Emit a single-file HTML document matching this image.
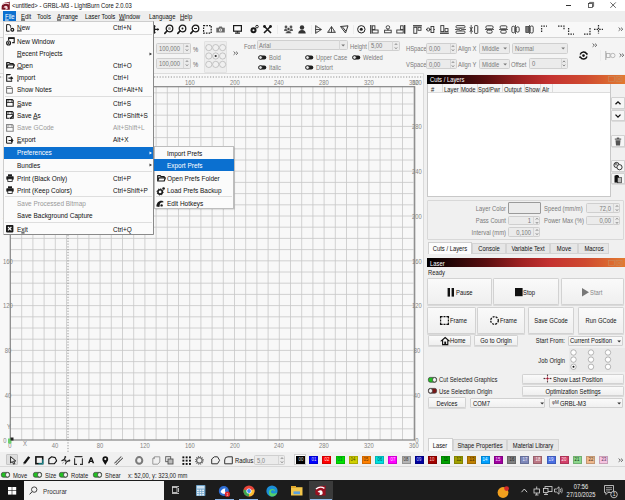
<!DOCTYPE html><html><head><meta charset="utf-8"><style>
*{margin:0;padding:0;box-sizing:border-box}
html,body{width:625px;height:500px;overflow:hidden;background:#f0f0f0;font-family:"Liberation Sans",sans-serif}
div{position:absolute}
.t u{text-decoration-thickness:0.5px;text-underline-offset:0.1px}
.t{white-space:pre;line-height:1;-webkit-text-stroke:0.02px currentColor}
.r{transform:translate(-100%,-50%)}
.c{transform:translate(-50%,-50%)}
svg{position:absolute;overflow:visible}
</style></head><body>
<div style="left:0px;top:0px;width:625px;height:11px;background:#fff"></div>
<div style="left:0px;top:11px;width:625px;height:10.5px;background:#eeeeee"></div>
<div style="left:0px;top:21.5px;width:625px;height:15.1px;background:#f8f8f8"></div>
<div style="left:0px;top:36.6px;width:625px;height:0.9px;background:#d4d4d4"></div>
<div style="left:0px;top:37.5px;width:625px;height:36.8px;background:#f4f4f4"></div>
<div style="left:0px;top:74px;width:424px;height:378px;background:#f8f8f8"></div>
<svg width="625" height="500" style="left:0;top:0"><g stroke="#c6c6c6" stroke-width="0.8"><line x1="21.70" y1="86.7" x2="21.70" y2="440" /><line x1="32.90" y1="86.7" x2="32.90" y2="440" /><line x1="44.10" y1="86.7" x2="44.10" y2="440" /><line x1="55.30" y1="86.7" x2="55.30" y2="440" /><line x1="66.50" y1="86.7" x2="66.50" y2="440" /><line x1="77.70" y1="86.7" x2="77.70" y2="440" /><line x1="88.90" y1="86.7" x2="88.90" y2="440" /><line x1="100.10" y1="86.7" x2="100.10" y2="440" /><line x1="111.30" y1="86.7" x2="111.30" y2="440" /><line x1="122.50" y1="86.7" x2="122.50" y2="440" /><line x1="133.70" y1="86.7" x2="133.70" y2="440" /><line x1="144.90" y1="86.7" x2="144.90" y2="440" /><line x1="156.10" y1="86.7" x2="156.10" y2="440" /><line x1="167.30" y1="86.7" x2="167.30" y2="440" /><line x1="178.50" y1="86.7" x2="178.50" y2="440" /><line x1="189.70" y1="86.7" x2="189.70" y2="440" /><line x1="200.90" y1="86.7" x2="200.90" y2="440" /><line x1="212.10" y1="86.7" x2="212.10" y2="440" /><line x1="223.30" y1="86.7" x2="223.30" y2="440" /><line x1="234.50" y1="86.7" x2="234.50" y2="440" /><line x1="245.70" y1="86.7" x2="245.70" y2="440" /><line x1="256.90" y1="86.7" x2="256.90" y2="440" /><line x1="268.10" y1="86.7" x2="268.10" y2="440" /><line x1="279.30" y1="86.7" x2="279.30" y2="440" /><line x1="290.50" y1="86.7" x2="290.50" y2="440" /><line x1="301.70" y1="86.7" x2="301.70" y2="440" /><line x1="312.90" y1="86.7" x2="312.90" y2="440" /><line x1="324.10" y1="86.7" x2="324.10" y2="440" /><line x1="335.30" y1="86.7" x2="335.30" y2="440" /><line x1="346.50" y1="86.7" x2="346.50" y2="440" /><line x1="357.70" y1="86.7" x2="357.70" y2="440" /><line x1="368.90" y1="86.7" x2="368.90" y2="440" /><line x1="380.10" y1="86.7" x2="380.10" y2="440" /><line x1="391.30" y1="86.7" x2="391.30" y2="440" /><line x1="402.50" y1="86.7" x2="402.50" y2="440" /><line x1="413.70" y1="86.7" x2="413.70" y2="440" /><line x1="10.5" y1="428.80" x2="414.7" y2="428.80" /><line x1="10.5" y1="417.60" x2="414.7" y2="417.60" /><line x1="10.5" y1="406.40" x2="414.7" y2="406.40" /><line x1="10.5" y1="395.20" x2="414.7" y2="395.20" /><line x1="10.5" y1="384.00" x2="414.7" y2="384.00" /><line x1="10.5" y1="372.80" x2="414.7" y2="372.80" /><line x1="10.5" y1="361.60" x2="414.7" y2="361.60" /><line x1="10.5" y1="350.40" x2="414.7" y2="350.40" /><line x1="10.5" y1="339.20" x2="414.7" y2="339.20" /><line x1="10.5" y1="328.00" x2="414.7" y2="328.00" /><line x1="10.5" y1="316.80" x2="414.7" y2="316.80" /><line x1="10.5" y1="305.60" x2="414.7" y2="305.60" /><line x1="10.5" y1="294.40" x2="414.7" y2="294.40" /><line x1="10.5" y1="283.20" x2="414.7" y2="283.20" /><line x1="10.5" y1="272.00" x2="414.7" y2="272.00" /><line x1="10.5" y1="260.80" x2="414.7" y2="260.80" /><line x1="10.5" y1="249.60" x2="414.7" y2="249.60" /><line x1="10.5" y1="238.40" x2="414.7" y2="238.40" /><line x1="10.5" y1="227.20" x2="414.7" y2="227.20" /><line x1="10.5" y1="216.00" x2="414.7" y2="216.00" /><line x1="10.5" y1="204.80" x2="414.7" y2="204.80" /><line x1="10.5" y1="193.60" x2="414.7" y2="193.60" /><line x1="10.5" y1="182.40" x2="414.7" y2="182.40" /><line x1="10.5" y1="171.20" x2="414.7" y2="171.20" /><line x1="10.5" y1="160.00" x2="414.7" y2="160.00" /><line x1="10.5" y1="148.80" x2="414.7" y2="148.80" /><line x1="10.5" y1="137.60" x2="414.7" y2="137.60" /><line x1="10.5" y1="126.40" x2="414.7" y2="126.40" /><line x1="10.5" y1="115.20" x2="414.7" y2="115.20" /><line x1="10.5" y1="104.00" x2="414.7" y2="104.00" /><line x1="10.5" y1="92.80" x2="414.7" y2="92.80" /></g><rect x="10.3" y="86.7" width="404.4" height="353.3" fill="none" stroke="#858585" stroke-width="1.2"/><line x1="0" y1="77" x2="423" y2="77" stroke="#777" stroke-width="0.8" stroke-dasharray="1.2,1.6"/><line x1="68" y1="86.7" x2="68" y2="452" stroke="#777" stroke-width="0.8" stroke-dasharray="1.2,1.6"/></svg>
<div style="left:424px;top:74px;width:201px;height:378px;background:#f0f0f0"></div>
<div style="left:0px;top:452px;width:625px;height:14px;background:#f0f0f0"></div>
<div style="left:0px;top:466px;width:625px;height:0.8px;background:#d8d8d8"></div>
<div style="left:0px;top:466.8px;width:625px;height:13.5px;background:#f0f0f0"></div>
<div style="left:0px;top:480.3px;width:625px;height:20px;background:#1c1c1c"></div>
<svg width="10" height="10" style="left:1px;top:1px"><path d="M0.6 8.6 Q0.2 4.5 1.6 3 Q4.5 0.6 7.6 1.2 L8.8 0.6 L8.8 8.8 H2.6 Z" fill="#7a1424"/><path d="M1.2 3.6 Q4.6 0.9 8 3" fill="none" stroke="#f2d8dc" stroke-width="1.1"/><path d="M2.4 6.4 Q3.6 4.4 5.8 5 Q7 5.6 6.7 7.8 Q5.5 9 4 8.4 Q5.1 7.4 4.3 6.8 Z" fill="#f2d8dc"/></svg>
<div class="t " style="left:12.3px;top:6.4px;font-size:6.60919540229885px;color:#111;transform:translateY(-50%) scaleX(0.89);transform-origin:0 50%;">&lt;untitled&gt; - GRBL-M3 - LightBurn Core 2.0.03</div>
<div style="left:566.2px;top:5.2px;width:5px;height:0.7px;background:#333"></div>
<svg width="8" height="8" style="left:588.2px;top:2.4px"><rect x="0.4" y="1.6" width="4" height="4" fill="none" stroke="#333" stroke-width="0.75"/><path d="M1.6 1.6 V0.4 H5.6 V4.4 H4.4" fill="none" stroke="#333" stroke-width="0.75"/></svg>
<svg width="8" height="8" style="left:610px;top:2.2px"><path d="M0.4 0.4 L5.8 5.8 M5.8 0.4 L0.4 5.8" stroke="#333" stroke-width="0.75"/></svg>
<div style="left:3px;top:11.2px;width:13px;height:10.3px;background:#0b70d0"></div>
<div class="t " style="left:5px;top:17.3px;font-size:7.011494252873562px;color:#fff;transform:translateY(-50%) scaleX(0.85);transform-origin:0 50%;"><u>F</u>ile</div>
<div class="t " style="left:21px;top:17.3px;font-size:7.011494252873562px;color:#111;transform:translateY(-50%) scaleX(0.85);transform-origin:0 50%;"><u>E</u>dit</div>
<div class="t " style="left:37px;top:17.3px;font-size:7.011494252873562px;color:#111;transform:translateY(-50%) scaleX(0.85);transform-origin:0 50%;">Tools</div>
<div class="t " style="left:57px;top:17.3px;font-size:7.011494252873562px;color:#111;transform:translateY(-50%) scaleX(0.85);transform-origin:0 50%;"><u>A</u>rrange</div>
<div class="t " style="left:84.6px;top:17.3px;font-size:7.011494252873562px;color:#111;transform:translateY(-50%) scaleX(0.85);transform-origin:0 50%;">Laser Tools</div>
<div class="t " style="left:119px;top:17.3px;font-size:7.011494252873562px;color:#111;transform:translateY(-50%) scaleX(0.85);transform-origin:0 50%;"><u>W</u>indow</div>
<div class="t " style="left:149px;top:17.3px;font-size:7.011494252873562px;color:#111;transform:translateY(-50%) scaleX(0.85);transform-origin:0 50%;">Language</div>
<div class="t " style="left:179.6px;top:17.3px;font-size:7.011494252873562px;color:#111;transform:translateY(-50%) scaleX(0.85);transform-origin:0 50%;"><u>H</u>elp</div>
<svg width="10" height="9" viewBox="0 0 10 9" style="left:150px;top:24.5px"><path d="M4.5 0.5 V8.3 M0.6 4.4 H8.6" fill="none" stroke="#1a1a1a" stroke-width="1.2"/><path d="M3 1.6 L4.5 0 L6 1.6 Z M3 7.2 L4.5 8.8 L6 7.2 Z M7.4 2.9 L9.2 4.4 L7.4 5.9 Z" fill="#1a1a1a"/></svg>
<svg width="10" height="11" viewBox="0 0 10 11" style="left:163.5px;top:23.5px"><circle cx="5.5" cy="4.5" r="3.3" fill="none" stroke="#1a1a1a" stroke-width="1.3"/><path d="M3.2 6.8 L0.8 9.4" stroke="#1a1a1a" stroke-width="1.6" stroke-linecap="round"/><circle cx="5.5" cy="4.5" r="1.5" fill="#999"/></svg>
<svg width="10" height="11" viewBox="0 0 10 11" style="left:176.5px;top:23.5px"><circle cx="5.5" cy="4.5" r="3.3" fill="none" stroke="#1a1a1a" stroke-width="1.3"/><path d="M3.2 6.8 L0.8 9.4" stroke="#1a1a1a" stroke-width="1.6" stroke-linecap="round"/><circle cx="5.5" cy="4.5" r="1" fill="#1a1a1a"/></svg>
<svg width="10" height="11" viewBox="0 0 10 11" style="left:189.5px;top:23.5px"><circle cx="5.5" cy="4.5" r="3.3" fill="none" stroke="#1a1a1a" stroke-width="1.3"/><path d="M3.2 6.8 L0.8 9.4" stroke="#1a1a1a" stroke-width="1.6" stroke-linecap="round"/><path d="M4 4.5 H7" stroke="#1a1a1a" stroke-width="1"/></svg>
<svg width="9" height="9" viewBox="0 0 9 9" style="left:203.2px;top:25.2px"><rect x="0.6" y="0.6" width="7.6" height="7.6" fill="none" stroke="#1a1a1a" stroke-width="1.2" stroke-dasharray="1.6,1.1"/></svg>
<svg width="10" height="7" viewBox="0 0 10 7" style="left:216px;top:25.5px"><path d="M0.3 1.8 H2.5 L3.3 0.4 H5.8 L6.6 1.8 H8.8 V6.6 H0.3 Z" fill="#6a6a6a"/><circle cx="4.55" cy="4" r="1.6" fill="#f7f7f7"/><circle cx="4.55" cy="4" r="0.8" fill="#6a6a6a"/></svg>
<svg width="9" height="9" viewBox="0 0 9 9" style="left:233px;top:24.8px"><rect x="0.6" y="0.6" width="7.8" height="5.6" fill="none" stroke="#1a1a1a" stroke-width="1.2"/><rect x="3.8" y="6.2" width="1.4" height="1.4" fill="#1a1a1a"/><rect x="2" y="7.5" width="5" height="1.2" fill="#1a1a1a"/></svg>
<svg width="9" height="9" viewBox="0 0 9 9" style="left:249.5px;top:24.8px"><circle cx="3.5" cy="5.2" r="3" fill="#1a1a1a"/><circle cx="3.5" cy="5.2" r="1" fill="#f7f7f7"/><circle cx="7" cy="1.6" r="1.3" fill="none" stroke="#1a1a1a" stroke-width="0.9"/></svg>
<svg width="9" height="9" viewBox="0 0 9 9" style="left:262.5px;top:24.8px"><path d="M1 1 L8 8 M8 1 L1 8" stroke="#1a1a1a" stroke-width="1.6"/><circle cx="1.5" cy="1.5" r="1.4" fill="#1a1a1a"/><circle cx="7.5" cy="1.5" r="1.4" fill="#1a1a1a"/></svg>
<div style="left:277px;top:25px;width:1.2px;height:9px;background:#ececec"></div>
<svg width="9" height="9" viewBox="0 0 9 9" style="left:284px;top:24.8px"><circle cx="2" cy="2" r="1.4" fill="#555"/><circle cx="7" cy="2" r="1.4" fill="#555"/><path d="M0 6 Q0 3.6 2 3.6 Q3.4 3.6 3.6 4.6 V6 Z M9 6 Q9 3.6 7 3.6 Q5.6 3.6 5.4 4.6 V6 Z" fill="#555"/><circle cx="4.5" cy="4" r="1.6" fill="#444" stroke="#f7f7f7" stroke-width="0.5"/><path d="M1.6 8.6 Q1.6 5.8 4.5 5.8 Q7.4 5.8 7.4 8.6 Z" fill="#444" stroke="#f7f7f7" stroke-width="0.5"/></svg>
<svg width="8" height="9" viewBox="0 0 8 9" style="left:297.5px;top:25px"><circle cx="4" cy="2.5" r="2.2" fill="#333"/><path d="M0.3 8.5 Q0.3 5 4 5 Q7.7 5 7.7 8.5 Z" fill="#333"/></svg>
<div style="left:310.8px;top:25px;width:1.2px;height:9px;background:#ececec"></div>
<svg width="7" height="9" viewBox="0 0 7 9" style="left:314.8px;top:25px"><path d="M0.6 0.6 L6.4 4.5 L0.6 8.4 Z M0.6 4.5 H6.4" fill="none" stroke="#333" stroke-width="0.9"/><path d="M0.6 2.6 L3.6 2.6 M0.6 6.4 L3.6 6.4" stroke="#777" stroke-width="0.6"/></svg>
<svg width="9" height="7" viewBox="0 0 9 7" style="left:326.5px;top:25.5px"><path d="M4.5 0.6 L8.4 6.4 H0.6 Z M4.5 0.6 V6.4" fill="none" stroke="#333" stroke-width="0.9"/><path d="M2.6 3.6 V6.4 M6.4 3.6 V6.4" stroke="#777" stroke-width="0.6"/></svg>
<svg width="9" height="9" viewBox="0 0 9 9" style="left:340px;top:25px"><path d="M0.5 1.5 L8 0.8 L5.5 8 Z M2.5 2 L5.8 6" fill="none" stroke="#333" stroke-width="1"/></svg>
<div style="left:353px;top:25px;width:1.2px;height:9px;background:#ececec"></div>
<svg width="9" height="9" viewBox="0 0 9 9" style="left:356.8px;top:24.8px"><circle cx="4.3" cy="4.3" r="3.7" fill="none" stroke="#222" stroke-width="1"/><circle cx="4.3" cy="4.3" r="1.5" fill="#222"/></svg>
<svg width="9" height="9" viewBox="0 0 9 9" style="left:369.5px;top:25px"><path d="M0.8 0 V8.8" stroke="#333" stroke-width="1.3"/><rect x="2.3" y="0.8" width="2.6" height="3.8" fill="none" stroke="#333" stroke-width="0.9"/><rect x="2.3" y="5" width="5.8" height="3" fill="none" stroke="#333" stroke-width="0.9"/></svg>
<svg width="8" height="9" viewBox="0 0 8 9" style="left:384.4px;top:25px"><rect x="2.2" y="0.8" width="3.4" height="3" rx="1.2" fill="none" stroke="#333" stroke-width="0.9"/><rect x="0.6" y="5.2" width="6.6" height="2.6" fill="none" stroke="#333" stroke-width="0.9"/><path d="M3.9 3.8 V5.2" stroke="#333"/></svg>
<svg width="10" height="9" viewBox="0 0 10 9" style="left:396px;top:25px"><path d="M8.7 0 V8.8" stroke="#333" stroke-width="1.3"/><rect x="4.6" y="0.8" width="2.6" height="3.8" fill="none" stroke="#333" stroke-width="0.9"/><rect x="0.8" y="5" width="6.4" height="3" fill="none" stroke="#333" stroke-width="0.9"/></svg>
<svg width="9" height="9" viewBox="0 0 9 9" style="left:412.7px;top:25px"><path d="M0 0.8 H8.8" stroke="#333" stroke-width="1.3"/><rect x="0.8" y="2.3" width="3" height="6" fill="none" stroke="#333" stroke-width="0.9"/><rect x="5" y="2.3" width="3" height="3" fill="none" stroke="#333" stroke-width="0.9"/></svg>
<svg width="9" height="9" viewBox="0 0 9 9" style="left:426.2px;top:25px"><path d="M0 4.5 H8.8" stroke="#333" stroke-width="1"/><rect x="1" y="3" width="2.6" height="3" rx="1" fill="#f7f7f7" stroke="#333" stroke-width="0.9"/><rect x="5" y="1.5" width="2.8" height="6" fill="#f7f7f7" stroke="#333" stroke-width="0.9"/></svg>
<svg width="9" height="9" viewBox="0 0 9 9" style="left:439.6px;top:25px"><path d="M0 8.2 H8.8" stroke="#333" stroke-width="1.3"/><rect x="0.8" y="0.6" width="3" height="6" fill="none" stroke="#333" stroke-width="0.9"/><rect x="5" y="3.6" width="3" height="3" fill="none" stroke="#333" stroke-width="0.9"/></svg>
<svg width="11" height="9" viewBox="0 0 11 9" style="left:455px;top:25px"><rect x="1" y="0.6" width="9" height="2.4" rx="1" fill="none" stroke="#333" stroke-width="0.9"/><rect x="1" y="6" width="9" height="2.4" rx="1" fill="none" stroke="#333" stroke-width="0.9"/><path d="M0 4.5 H3.5 L5.5 3.5 L7.5 4.5 H11 M3.5 4.5 L5.5 5.5 L7.5 4.5" fill="none" stroke="#333" stroke-width="0.8"/></svg>
<svg width="10" height="9" viewBox="0 0 10 9" style="left:469px;top:25px"><rect x="5.6" y="0.6" width="3.2" height="7.8" rx="0.6" fill="none" stroke="#333" stroke-width="0.9"/><path d="M2.2 0 V8.8 M0.8 2 L2.2 4.5 L3.6 2 M0.8 7 L2.2 4.5 L3.6 7" fill="none" stroke="#333" stroke-width="0.8"/></svg>
<svg width="9" height="9" viewBox="0 0 9 9" style="left:485px;top:25px"><rect x="0.8" y="0.8" width="7.4" height="3" rx="1.5" fill="none" stroke="#333" stroke-width="0.9"/><rect x="1.8" y="5.2" width="5.4" height="3" rx="1.5" fill="none" stroke="#333" stroke-width="0.9"/><path d="M0 4.5 H9" stroke="#333" stroke-width="0.8"/></svg>
<svg width="9" height="9" viewBox="0 0 9 9" style="left:498.6px;top:25px"><rect x="1.2" y="0.8" width="6.6" height="3" rx="1" fill="none" stroke="#333" stroke-width="0.9"/><rect x="1.8" y="5.2" width="5.4" height="3" rx="1" fill="none" stroke="#333" stroke-width="0.9"/><path d="M0 4.5 H9" stroke="#333" stroke-width="0.8"/></svg>
<svg width="9" height="9" viewBox="0 0 9 9" style="left:511.4px;top:25px"><rect x="0.8" y="1.2" width="3" height="6.6" rx="1.5" fill="none" stroke="#333" stroke-width="0.9"/><rect x="5.2" y="1.8" width="3" height="5.4" rx="1.5" fill="none" stroke="#333" stroke-width="0.9"/><path d="M4.5 0 V9" stroke="#333" stroke-width="0.8"/></svg>
<svg width="9" height="9" viewBox="0 0 9 9" style="left:524.9px;top:25px"><rect x="0.8" y="1.5" width="3" height="6" fill="#777" stroke="#333" stroke-width="0.7"/><rect x="5.2" y="1" width="3" height="7" rx="1.2" fill="none" stroke="#333" stroke-width="0.9"/><path d="M4.5 0 V9" stroke="#333" stroke-width="0.8"/></svg>
<svg width="7" height="9" viewBox="0 0 7 9" style="left:541px;top:24.5px"><path d="M0.6 7 V1 H6" fill="none" stroke="#2a2a2a" stroke-width="1.25" stroke-dasharray="1.5,1.1"/></svg>
<svg width="7" height="9" viewBox="0 0 7 9" style="left:557.5px;top:24.5px"><path d="M0 1 H6 V5" fill="none" stroke="#2a2a2a" stroke-width="1.25" stroke-dasharray="1.5,1.1"/></svg>
<svg width="7" height="7" viewBox="0 0 7 7" style="left:568px;top:27.5px"><path d="M0.6 0 V6 H6" fill="none" stroke="#2a2a2a" stroke-width="1.25" stroke-dasharray="1.5,1.1"/></svg>
<svg width="7" height="7" viewBox="0 0 7 7" style="left:584px;top:27.5px"><path d="M0 6 H6 V0" fill="none" stroke="#2a2a2a" stroke-width="1.25" stroke-dasharray="1.5,1.1"/></svg>
<svg width="9" height="9" viewBox="0 0 9 9" style="left:594px;top:24.5px"><path d="M4.5 0 V8.5 M0 4.3 H9" fill="none" stroke="#2a2a2a" stroke-width="1.25" stroke-dasharray="1.5,1.1"/></svg>
<svg width="6" height="5" viewBox="0 0 6 5" style="left:617.8px;top:26.8px"><path d="M0.6 0.6 L2.4 2.2 L0.6 3.8 M3 0.6 L4.8 2.2 L3 3.8" fill="none" stroke="#444" stroke-width="0.8"/></svg>
<div class="t " style="left:189.70000000000002px;top:82.7px;font-size:6.896551724137931px;color:#858585;transform:translate(-50%,-50%) scaleX(0.85);transform-origin:50% 50%;">160</div>
<div class="t " style="left:234.50000000000003px;top:82.7px;font-size:6.896551724137931px;color:#858585;transform:translate(-50%,-50%) scaleX(0.85);transform-origin:50% 50%;">200</div>
<div class="t " style="left:279.3px;top:82.7px;font-size:6.896551724137931px;color:#858585;transform:translate(-50%,-50%) scaleX(0.85);transform-origin:50% 50%;">240</div>
<div class="t " style="left:324.1px;top:82.7px;font-size:6.896551724137931px;color:#858585;transform:translate(-50%,-50%) scaleX(0.85);transform-origin:50% 50%;">280</div>
<div class="t " style="left:368.90000000000003px;top:82.7px;font-size:6.896551724137931px;color:#858585;transform:translate(-50%,-50%) scaleX(0.85);transform-origin:50% 50%;">320</div>
<div class="t " style="left:414px;top:82.7px;font-size:6.896551724137931px;color:#858585;transform:translate(-50%,-50%) scaleX(0.85);transform-origin:50% 50%;">360</div>
<div class="t " style="left:416.6px;top:82.7px;font-size:6.896551724137931px;color:#858585;transform:translate(-50%,-50%) scaleX(0.85);transform-origin:50% 50%;">320</div>
<div class="t " style="left:55.300000000000004px;top:446.4px;font-size:6.896551724137931px;color:#858585;transform:translate(-50%,-50%) scaleX(0.85);transform-origin:50% 50%;">40</div>
<div class="t " style="left:100.10000000000001px;top:446.4px;font-size:6.896551724137931px;color:#858585;transform:translate(-50%,-50%) scaleX(0.85);transform-origin:50% 50%;">80</div>
<div class="t " style="left:144.9px;top:446.4px;font-size:6.896551724137931px;color:#858585;transform:translate(-50%,-50%) scaleX(0.85);transform-origin:50% 50%;">120</div>
<div class="t " style="left:189.70000000000002px;top:446.4px;font-size:6.896551724137931px;color:#858585;transform:translate(-50%,-50%) scaleX(0.85);transform-origin:50% 50%;">160</div>
<div class="t " style="left:234.50000000000003px;top:446.4px;font-size:6.896551724137931px;color:#858585;transform:translate(-50%,-50%) scaleX(0.85);transform-origin:50% 50%;">200</div>
<div class="t " style="left:279.3px;top:446.4px;font-size:6.896551724137931px;color:#858585;transform:translate(-50%,-50%) scaleX(0.85);transform-origin:50% 50%;">240</div>
<div class="t " style="left:324.1px;top:446.4px;font-size:6.896551724137931px;color:#858585;transform:translate(-50%,-50%) scaleX(0.85);transform-origin:50% 50%;">280</div>
<div class="t " style="left:368.90000000000003px;top:446.4px;font-size:6.896551724137931px;color:#858585;transform:translate(-50%,-50%) scaleX(0.85);transform-origin:50% 50%;">320</div>
<div class="t " style="left:413.70000000000005px;top:446.4px;font-size:6.896551724137931px;color:#858585;transform:translate(-50%,-50%) scaleX(0.85);transform-origin:50% 50%;">360</div>
<div class="t " style="left:10px;top:446.2px;font-size:6.896551724137931px;color:#858585;transform:translate(-50%,-50%) scaleX(0.85);transform-origin:50% 50%;">0</div>
<div class="t " style="left:24.5px;top:444.2px;font-size:6.896551724137931px;color:#858585;transform:translate(-50%,-50%) scaleX(0.85);transform-origin:50% 50%;">X</div>
<div class="t " style="left:8px;top:395.9px;font-size:6.896551724137931px;color:#858585;transform:translate(-50%,-50%) scaleX(0.85);transform-origin:50% 50%;">40</div>
<div class="t " style="left:416.6px;top:395.9px;font-size:6.896551724137931px;color:#858585;transform:translate(-50%,-50%) scaleX(0.85);transform-origin:50% 50%;">40</div>
<div class="t " style="left:8px;top:351.09999999999997px;font-size:6.896551724137931px;color:#858585;transform:translate(-50%,-50%) scaleX(0.85);transform-origin:50% 50%;">80</div>
<div class="t " style="left:416.6px;top:351.09999999999997px;font-size:6.896551724137931px;color:#858585;transform:translate(-50%,-50%) scaleX(0.85);transform-origin:50% 50%;">80</div>
<div class="t " style="left:8px;top:306.3px;font-size:6.896551724137931px;color:#858585;transform:translate(-50%,-50%) scaleX(0.85);transform-origin:50% 50%;">120</div>
<div class="t " style="left:416.6px;top:306.3px;font-size:6.896551724137931px;color:#858585;transform:translate(-50%,-50%) scaleX(0.85);transform-origin:50% 50%;">120</div>
<div class="t " style="left:8px;top:261.49999999999994px;font-size:6.896551724137931px;color:#858585;transform:translate(-50%,-50%) scaleX(0.85);transform-origin:50% 50%;">160</div>
<div class="t " style="left:416.6px;top:261.49999999999994px;font-size:6.896551724137931px;color:#858585;transform:translate(-50%,-50%) scaleX(0.85);transform-origin:50% 50%;">160</div>
<div class="t " style="left:8px;top:216.69999999999996px;font-size:6.896551724137931px;color:#858585;transform:translate(-50%,-50%) scaleX(0.85);transform-origin:50% 50%;">200</div>
<div class="t " style="left:416.6px;top:216.69999999999996px;font-size:6.896551724137931px;color:#858585;transform:translate(-50%,-50%) scaleX(0.85);transform-origin:50% 50%;">200</div>
<div class="t " style="left:8px;top:171.89999999999998px;font-size:6.896551724137931px;color:#858585;transform:translate(-50%,-50%) scaleX(0.85);transform-origin:50% 50%;">240</div>
<div class="t " style="left:416.6px;top:171.89999999999998px;font-size:6.896551724137931px;color:#858585;transform:translate(-50%,-50%) scaleX(0.85);transform-origin:50% 50%;">240</div>
<div class="t " style="left:8px;top:127.09999999999998px;font-size:6.896551724137931px;color:#858585;transform:translate(-50%,-50%) scaleX(0.85);transform-origin:50% 50%;">280</div>
<div class="t " style="left:416.6px;top:127.09999999999998px;font-size:6.896551724137931px;color:#858585;transform:translate(-50%,-50%) scaleX(0.85);transform-origin:50% 50%;">280</div>
<div class="t " style="left:8.5px;top:426.7px;font-size:6.896551724137931px;color:#858585;transform:translate(-50%,-50%) scaleX(0.85);transform-origin:50% 50%;">Y</div>
<div class="t " style="left:4.8px;top:441.2px;font-size:6.896551724137931px;color:#858585;transform:translate(-50%,-50%) scaleX(0.85);transform-origin:50% 50%;">0</div>
<div class="t " style="left:416.6px;top:441.2px;font-size:6.896551724137931px;color:#858585;transform:translate(-50%,-50%) scaleX(0.85);transform-origin:50% 50%;">0</div>
<svg width="8" height="8" style="left:7px;top:436.5px"><rect x="1" y="1.5" width="3.5" height="5" fill="#6cd06c"/><rect x="3.5" y="0.5" width="3" height="3" fill="#222"/></svg>
<div style="left:156.2px;top:43.2px;width:34.4px;height:10.4px;background:#ebebeb;border:0.8px solid #cfcfcf;border-radius:1.5px"></div>
<div style="left:183.4px;top:44.0px;width:0.8px;height:8.8px;background:#d6d6d6"></div>
<svg width="4" height="10.4" style="left:185.0px;top:43.2px"><path d="M0.8 4.0 L2 2.6 L3.2 4.0" fill="none" stroke="#666" stroke-width="0.7"/><path d="M0.8 6.4 L2 7.800000000000001 L3.2 6.4" fill="none" stroke="#666" stroke-width="0.7"/></svg>
<div class="t " style="left:159.2px;top:49.10000000000001px;font-size:6.896551724137931px;color:#7a7a7a;transform:translateY(-50%) scaleX(0.85);transform-origin:0 50%;">100,000</div>
<div class="t " style="left:192.5px;top:49.7px;font-size:6.896551724137931px;color:#666;transform:translateY(-50%) scaleX(0.85);transform-origin:0 50%;">%</div>
<div style="left:156.2px;top:58.4px;width:34.4px;height:10.4px;background:#ebebeb;border:0.8px solid #cfcfcf;border-radius:1.5px"></div>
<div style="left:183.4px;top:59.199999999999996px;width:0.8px;height:8.8px;background:#d6d6d6"></div>
<svg width="4" height="10.4" style="left:185.0px;top:58.4px"><path d="M0.8 4.0 L2 2.6 L3.2 4.0" fill="none" stroke="#666" stroke-width="0.7"/><path d="M0.8 6.4 L2 7.800000000000001 L3.2 6.4" fill="none" stroke="#666" stroke-width="0.7"/></svg>
<div class="t " style="left:159.2px;top:64.3px;font-size:6.896551724137931px;color:#7a7a7a;transform:translateY(-50%) scaleX(0.85);transform-origin:0 50%;">100,000</div>
<div class="t " style="left:192.5px;top:64.5px;font-size:6.896551724137931px;color:#666;transform:translateY(-50%) scaleX(0.85);transform-origin:0 50%;">%</div>
<div style="left:204.3px;top:41.4px;width:23.1px;height:31.2px;background:#ededed;border:0.8px solid #e2e2e2;border-radius:1px"></div>
<svg width="625" height="80" style="left:0;top:0"><circle cx="208.8" cy="47.6" r="3.1" fill="#f0f0f0" stroke="#a8a8a8" stroke-width="0.6"/><circle cx="215.7" cy="47.6" r="3.1" fill="#f0f0f0" stroke="#a8a8a8" stroke-width="0.6"/><circle cx="222.6" cy="47.6" r="3.1" fill="#f0f0f0" stroke="#a8a8a8" stroke-width="0.6"/><circle cx="208.8" cy="56" r="3.1" fill="#f0f0f0" stroke="#a8a8a8" stroke-width="0.6"/><circle cx="215.7" cy="56" r="3.1" fill="#f0f0f0" stroke="#a8a8a8" stroke-width="0.6"/><circle cx="222.6" cy="56" r="3.1" fill="#f0f0f0" stroke="#a8a8a8" stroke-width="0.6"/><circle cx="208.8" cy="64.4" r="3.1" fill="#f0f0f0" stroke="#a8a8a8" stroke-width="0.6"/><circle cx="215.7" cy="64.4" r="3.1" fill="#f0f0f0" stroke="#a8a8a8" stroke-width="0.6"/><circle cx="222.6" cy="64.4" r="3.1" fill="#f0f0f0" stroke="#a8a8a8" stroke-width="0.6"/><circle cx="215.7" cy="56" r="1.1" fill="#333"/></svg>
<svg width="6" height="5" viewBox="0 0 6 5" style="left:232.8px;top:50.599999999999994px"><path d="M0.6 0.6 L2.4 2.2 L0.6 3.8 M3 0.6 L4.8 2.2 L3 3.8" fill="none" stroke="#444" stroke-width="0.8"/></svg>
<div class="t " style="left:244px;top:46.7px;font-size:6.896551724137931px;color:#7a7a7a;transform:translateY(-50%) scaleX(0.85);transform-origin:0 50%;">Font</div>
<div style="left:256.9px;top:39.6px;width:90.9px;height:10.9px;background:#ebebeb;border:0.8px solid #cfcfcf;border-radius:1.5px"></div>
<div style="left:338.49999999999994px;top:40.4px;width:0.8px;height:9.3px;background:#d6d6d6"></div>
<svg width="5" height="4" style="left:340.79999999999995px;top:43.85px"><path d="M0.3 0.5 H4 L2.15 2.6 Z" fill="#777"/></svg>
<div class="t " style="left:259.4px;top:45.75000000000001px;font-size:6.896551724137931px;color:#7a7a7a;transform:translateY(-50%) scaleX(0.85);transform-origin:0 50%;">Arial</div>
<svg width="10" height="6" style="left:257.9px;top:54.9px"><rect x="0.3" y="0.4" width="8" height="4.2" rx="2" fill="#1e1e1e"/><circle cx="2.5" cy="2.5" r="1.8" fill="#e8e8e8" stroke="#1e1e1e" stroke-width="0.8"/></svg>
<div class="t " style="left:269px;top:57.800000000000004px;font-size:6.896551724137931px;color:#7a7a7a;transform:translateY(-50%) scaleX(0.85);transform-origin:0 50%;">Bold</div>
<svg width="10" height="6" style="left:257.9px;top:65.19999999999999px"><rect x="0.3" y="0.4" width="8" height="4.2" rx="2" fill="#1e1e1e"/><circle cx="2.5" cy="2.5" r="1.8" fill="#e8e8e8" stroke="#1e1e1e" stroke-width="0.8"/></svg>
<div class="t " style="left:269px;top:68.2px;font-size:6.896551724137931px;color:#7a7a7a;transform:translateY(-50%) scaleX(0.85);transform-origin:0 50%;">Italic</div>
<svg width="10" height="6" style="left:305px;top:54.9px"><rect x="0.3" y="0.4" width="8" height="4.2" rx="2" fill="#1e1e1e"/><circle cx="2.5" cy="2.5" r="1.8" fill="#e8e8e8" stroke="#1e1e1e" stroke-width="0.8"/></svg>
<div class="t " style="left:316px;top:57.800000000000004px;font-size:6.896551724137931px;color:#7a7a7a;transform:translateY(-50%) scaleX(0.85);transform-origin:0 50%;">Upper Case</div>
<svg width="10" height="6" style="left:305px;top:65.19999999999999px"><rect x="0.3" y="0.4" width="8" height="4.2" rx="2" fill="#1e1e1e"/><circle cx="2.5" cy="2.5" r="1.8" fill="#e8e8e8" stroke="#1e1e1e" stroke-width="0.8"/></svg>
<div class="t " style="left:316px;top:68.2px;font-size:6.896551724137931px;color:#7a7a7a;transform:translateY(-50%) scaleX(0.85);transform-origin:0 50%;">Distort</div>
<svg width="10" height="6" style="left:352.3px;top:54.800000000000004px"><rect x="0.3" y="0.4" width="8" height="4.2" rx="2" fill="#1e1e1e"/><circle cx="2.5" cy="2.5" r="1.8" fill="#e8e8e8" stroke="#1e1e1e" stroke-width="0.8"/></svg>
<div class="t " style="left:363px;top:57.800000000000004px;font-size:6.896551724137931px;color:#7a7a7a;transform:translateY(-50%) scaleX(0.85);transform-origin:0 50%;">Welded</div>
<div class="t " style="left:349.6px;top:46.6px;font-size:6.896551724137931px;color:#7a7a7a;transform:translateY(-50%) scaleX(0.85);transform-origin:0 50%;">Height</div>
<div style="left:368.3px;top:40.5px;width:31.3px;height:10.4px;background:#ebebeb;border:0.8px solid #cfcfcf;border-radius:1.5px"></div>
<div style="left:392.40000000000003px;top:41.3px;width:0.8px;height:8.8px;background:#d6d6d6"></div>
<svg width="4" height="10.4" style="left:394.0px;top:40.5px"><path d="M0.8 4.0 L2 2.6 L3.2 4.0" fill="none" stroke="#666" stroke-width="0.7"/><path d="M0.8 6.4 L2 7.800000000000001 L3.2 6.4" fill="none" stroke="#666" stroke-width="0.7"/></svg>
<div class="t " style="left:371.3px;top:46.400000000000006px;font-size:6.896551724137931px;color:#7a7a7a;transform:translateY(-50%) scaleX(0.85);transform-origin:0 50%;">5,00</div>
<div class="t " style="left:405.8px;top:49.300000000000004px;font-size:6.896551724137931px;color:#7a7a7a;transform:translateY(-50%) scaleX(0.85);transform-origin:0 50%;">HSpace</div>
<div style="left:425.8px;top:43.2px;width:31.1px;height:10.4px;background:#ebebeb;border:0.8px solid #cfcfcf;border-radius:1.5px"></div>
<div style="left:449.70000000000005px;top:44.0px;width:0.8px;height:8.8px;background:#d6d6d6"></div>
<svg width="4" height="10.4" style="left:451.3px;top:43.2px"><path d="M0.8 4.0 L2 2.6 L3.2 4.0" fill="none" stroke="#666" stroke-width="0.7"/><path d="M0.8 6.4 L2 7.800000000000001 L3.2 6.4" fill="none" stroke="#666" stroke-width="0.7"/></svg>
<div class="t " style="left:428.8px;top:49.10000000000001px;font-size:6.896551724137931px;color:#7a7a7a;transform:translateY(-50%) scaleX(0.85);transform-origin:0 50%;">0,00</div>
<div class="t " style="left:405.8px;top:65.2px;font-size:6.896551724137931px;color:#7a7a7a;transform:translateY(-50%) scaleX(0.85);transform-origin:0 50%;">VSpace</div>
<div style="left:425.8px;top:58.8px;width:31.1px;height:10.4px;background:#ebebeb;border:0.8px solid #cfcfcf;border-radius:1.5px"></div>
<div style="left:449.70000000000005px;top:59.599999999999994px;width:0.8px;height:8.8px;background:#d6d6d6"></div>
<svg width="4" height="10.4" style="left:451.3px;top:58.8px"><path d="M0.8 4.0 L2 2.6 L3.2 4.0" fill="none" stroke="#666" stroke-width="0.7"/><path d="M0.8 6.4 L2 7.800000000000001 L3.2 6.4" fill="none" stroke="#666" stroke-width="0.7"/></svg>
<div class="t " style="left:428.8px;top:64.7px;font-size:6.896551724137931px;color:#7a7a7a;transform:translateY(-50%) scaleX(0.85);transform-origin:0 50%;">0,00</div>
<div class="t " style="left:458px;top:49.300000000000004px;font-size:6.896551724137931px;color:#7a7a7a;transform:translateY(-50%) scaleX(0.85);transform-origin:0 50%;">Align X</div>
<div style="left:479px;top:43px;width:30.5px;height:10.6px;background:#ebebeb;border:0.8px solid #cfcfcf;border-radius:1.5px"></div>
<svg width="5" height="4" style="left:502.5px;top:47.099999999999994px"><path d="M0.3 0.5 H4 L2.15 2.6 Z" fill="#777"/></svg>
<div class="t " style="left:481.5px;top:49.0px;font-size:6.896551724137931px;color:#7a7a7a;transform:translateY(-50%) scaleX(0.85);transform-origin:0 50%;">Middle</div>
<div style="left:512px;top:42.7px;width:56.3px;height:10.9px;background:#ebebeb;border:0.8px solid #cfcfcf;border-radius:1.5px"></div>
<svg width="5" height="4" style="left:561.3px;top:46.95px"><path d="M0.3 0.5 H4 L2.15 2.6 Z" fill="#777"/></svg>
<div class="t " style="left:514.5px;top:48.85000000000001px;font-size:6.896551724137931px;color:#7a7a7a;transform:translateY(-50%) scaleX(0.85);transform-origin:0 50%;">Normal</div>
<div class="t " style="left:458px;top:65.0px;font-size:6.896551724137931px;color:#7a7a7a;transform:translateY(-50%) scaleX(0.85);transform-origin:0 50%;">Align Y</div>
<div style="left:479px;top:58.5px;width:30.5px;height:10.6px;background:#ebebeb;border:0.8px solid #cfcfcf;border-radius:1.5px"></div>
<svg width="5" height="4" style="left:502.5px;top:62.599999999999994px"><path d="M0.3 0.5 H4 L2.15 2.6 Z" fill="#777"/></svg>
<div class="t " style="left:481.5px;top:64.5px;font-size:6.896551724137931px;color:#7a7a7a;transform:translateY(-50%) scaleX(0.85);transform-origin:0 50%;">Middle</div>
<div class="t " style="left:511px;top:65.0px;font-size:6.896551724137931px;color:#7a7a7a;transform:translateY(-50%) scaleX(0.85);transform-origin:0 50%;">Offset</div>
<div style="left:529px;top:58.3px;width:39px;height:10.9px;background:#ebebeb;border:0.8px solid #cfcfcf;border-radius:1.5px"></div>
<div style="left:560.8px;top:59.099999999999994px;width:0.8px;height:9.3px;background:#d6d6d6"></div>
<svg width="4" height="10.9" style="left:562.4px;top:58.3px"><path d="M0.8 4.25 L2 2.85 L3.2 4.25" fill="none" stroke="#666" stroke-width="0.7"/><path d="M0.8 6.65 L2 8.05 L3.2 6.65" fill="none" stroke="#666" stroke-width="0.7"/></svg>
<div class="t " style="left:532px;top:64.45px;font-size:6.896551724137931px;color:#7a7a7a;transform:translateY(-50%) scaleX(0.85);transform-origin:0 50%;">0</div>
<svg width="10" height="9" viewBox="0 0 10 9" style="left:578.8px;top:50.6px"><path d="M1.2 3.6 A3.6 3.6 0 0 1 7.8 3" fill="none" stroke="#111" stroke-width="1.5"/><path d="M8 5.6 A3.6 3.6 0 0 1 1.4 6.2" fill="none" stroke="#111" stroke-width="1.5"/><circle cx="4.5" cy="4.6" r="1.3" fill="#111"/><path d="M6.5 2.2 L9 2.4 L8 4.6 Z M2.6 7 L0 6.8 L1 4.6 Z" fill="#111"/></svg>
<svg width="6" height="5" viewBox="0 0 6 5" style="left:591.8px;top:43.3px"><path d="M0.6 0.6 L2.4 2.2 L0.6 3.8 M3 0.6 L4.8 2.2 L3 3.8" fill="none" stroke="#444" stroke-width="0.8"/></svg>
<div style="left:600px;top:50px;width:1.2px;height:11px;background:#ececec"></div>
<svg width="11" height="9" viewBox="0 0 11 9" style="left:605px;top:50.5px"><path d="M0.8 0 V9" stroke="#aaa" stroke-width="1"/><rect x="1.5" y="2.5" width="3.5" height="4" fill="none" stroke="#aaa" stroke-width="0.8"/><circle cx="7.8" cy="4.5" r="2.2" fill="none" stroke="#aaa" stroke-width="0.8"/></svg>
<svg width="6" height="5" viewBox="0 0 6 5" style="left:618.8px;top:53.099999999999994px"><path d="M0.6 0.6 L2.4 2.2 L0.6 3.8 M3 0.6 L4.8 2.2 L3 3.8" fill="none" stroke="#444" stroke-width="0.8"/></svg>
<div style="left:0px;top:72.8px;width:424px;height:0.8px;background:#dddddd"></div>
<div style="left:423.4px;top:74px;width:0.8px;height:378px;background:#dadada"></div>
<div style="left:427px;top:74.8px;width:198px;height:8.8px;background:linear-gradient(90deg,#000 0%,#1c0404 10%,#5a0f10 30%,#a02222 48%,#c43230 62%,#cf4a30 80%,#e27a30 100%)"></div>
<div class="t " style="left:430px;top:80.1px;font-size:6.896551724137931px;color:#fff;transform:translateY(-50%) scaleX(0.85);transform-origin:0 50%;">Cuts / Layers</div>
<svg width="16" height="8" style="left:608px;top:75.3px"><rect x="0.5" y="1.5" width="6" height="5" fill="none" stroke="#c98a5e" stroke-width="0.6"/><rect x="8" y="1.5" width="6" height="5" fill="none" stroke="#c98a5e" stroke-width="0.6"/><path d="M9 2.5 L13 5.5 M13 2.5 L9 5.5" stroke="#c98a5e" stroke-width="0.5"/></svg>
<div style="left:427.2px;top:83.6px;width:183.4px;height:113px;background:#fff;border:0.8px solid #c8c8c8"></div>
<div style="left:428px;top:84.4px;width:181.8px;height:8.6px;background:#f6f6f6;border-bottom:0.8px solid #dcdcdc"></div>
<div style="left:442px;top:84.4px;width:0.7px;height:8.6px;background:#dcdcdc"></div>
<div style="left:459.5px;top:84.4px;width:0.7px;height:8.6px;background:#dcdcdc"></div>
<div style="left:476.5px;top:84.4px;width:0.7px;height:8.6px;background:#dcdcdc"></div>
<div style="left:502px;top:84.4px;width:0.7px;height:8.6px;background:#dcdcdc"></div>
<div style="left:523.6px;top:84.4px;width:0.7px;height:8.6px;background:#dcdcdc"></div>
<div style="left:540.3px;top:84.4px;width:0.7px;height:8.6px;background:#dcdcdc"></div>
<div style="left:551.5px;top:84.4px;width:0.7px;height:8.6px;background:#dcdcdc"></div>
<div class="t " style="left:431px;top:89.5px;font-size:6.896551724137931px;color:#222;transform:translateY(-50%) scaleX(0.85);transform-origin:0 50%;">#</div>
<div class="t " style="left:444px;top:89.5px;font-size:6.896551724137931px;color:#222;transform:translateY(-50%) scaleX(0.85);transform-origin:0 50%;">Layer</div>
<div class="t " style="left:461px;top:89.5px;font-size:6.896551724137931px;color:#222;transform:translateY(-50%) scaleX(0.85);transform-origin:0 50%;">Mode</div>
<div class="t " style="left:478px;top:89.5px;font-size:6.896551724137931px;color:#222;transform:translateY(-50%) scaleX(0.85);transform-origin:0 50%;">Spd/Pwr</div>
<div class="t " style="left:504px;top:89.5px;font-size:6.896551724137931px;color:#222;transform:translateY(-50%) scaleX(0.85);transform-origin:0 50%;">Output</div>
<div class="t " style="left:525px;top:89.5px;font-size:6.896551724137931px;color:#222;transform:translateY(-50%) scaleX(0.85);transform-origin:0 50%;">Show</div>
<div class="t " style="left:542px;top:89.5px;font-size:6.896551724137931px;color:#222;transform:translateY(-50%) scaleX(0.85);transform-origin:0 50%;">Air</div>
<div style="left:611px;top:96.8px;width:13.5px;height:12.600000000000009px;background:#f6f6f6;border:0.8px solid #d2d2d2;border-radius:1px;box-shadow:0.5px 0.5px 0 #c8c8c8"></div>
<svg width="14" height="12.600000000000009" style="left:611px;top:96.8px"><path d="M4.5 7.3 L7 4.8 L9.5 7.3" fill="none" stroke="#111" stroke-width="1.3"/></svg>
<div style="left:611px;top:110px;width:13.5px;height:11.400000000000006px;background:#f6f6f6;border:0.8px solid #d2d2d2;border-radius:1px;box-shadow:0.5px 0.5px 0 #c8c8c8"></div>
<svg width="14" height="11.400000000000006" style="left:611px;top:110px"><path d="M4.5 4.6 L7 7.1 L9.5 4.6" fill="none" stroke="#111" stroke-width="1.3"/></svg>
<div style="left:611px;top:134.6px;width:13.5px;height:12.599999999999994px;background:#f6f6f6;border:0.8px solid #d2d2d2;border-radius:1px;box-shadow:0.5px 0.5px 0 #c8c8c8"></div>
<svg width="14" height="12.599999999999994" style="left:611px;top:134.6px"><rect x="3.8" y="3.6" width="6.4" height="1" fill="#444"/><rect x="5.8" y="2.6" width="2.4" height="1.2" fill="#444"/><path d="M4.5 5.2 H9.5 L9 10.6 H5 Z" fill="#555"/></svg>
<div style="left:611px;top:159.5px;width:13.5px;height:12.0px;background:#f6f6f6;border:0.8px solid #d2d2d2;border-radius:1px;box-shadow:0.5px 0.5px 0 #c8c8c8"></div>
<svg width="14" height="12.0" style="left:611px;top:159.5px"><circle cx="5.5" cy="5" r="2.6" fill="none" stroke="#222" stroke-width="0.9"/><circle cx="8.5" cy="7.2" r="2.6" fill="#f6f6f6" stroke="#222" stroke-width="0.9"/><circle cx="5" cy="4" r="1" fill="none" stroke="#222" stroke-width="0.6"/></svg>
<div style="left:611px;top:172.5px;width:13.5px;height:11.5px;background:#f6f6f6;border:0.8px solid #d2d2d2;border-radius:1px;box-shadow:0.5px 0.5px 0 #c8c8c8"></div>
<svg width="14" height="11.5" style="left:611px;top:172.5px"><rect x="3.5" y="2.6" width="4.5" height="7" fill="#111"/><rect x="6.5" y="4.6" width="4" height="5.2" fill="#bbb" stroke="#222" stroke-width="0.6"/><rect x="4.5" y="2" width="2.5" height="1.2" fill="#111"/></svg>
<div style="left:427px;top:199.6px;width:196.7px;height:40.6px;border:0.8px solid #d8d8d8;border-radius:1px"></div>
<div class="t " style="left:506px;top:209.2px;font-size:6.896551724137931px;color:#7a7a7a;transform:translate(-100%,-50%) scaleX(0.85);transform-origin:100% 50%;">Layer Color</div>
<div style="left:508.3px;top:202.1px;width:32.7px;height:11.6px;background:#ebebeb;border:0.9px solid #9a9a9a;border-radius:1px"></div>
<div class="t " style="left:506px;top:221.2px;font-size:6.896551724137931px;color:#7a7a7a;transform:translate(-100%,-50%) scaleX(0.85);transform-origin:100% 50%;">Pass Count</div>
<div style="left:508.3px;top:215.7px;width:32px;height:9.6px;background:#ebebeb;border:0.8px solid #cfcfcf;border-radius:1.5px"></div>
<div style="left:533.0999999999999px;top:216.5px;width:0.8px;height:8.0px;background:#d6d6d6"></div>
<svg width="4" height="9.6" style="left:534.6999999999999px;top:215.7px"><path d="M0.8 3.5999999999999996 L2 2.1999999999999997 L3.2 3.5999999999999996" fill="none" stroke="#666" stroke-width="0.7"/><path d="M0.8 6.0 L2 7.4 L3.2 6.0" fill="none" stroke="#666" stroke-width="0.7"/></svg>
<div class="t " style="left:531.3px;top:221.2px;font-size:6.896551724137931px;color:#7a7a7a;transform:translate(-100%,-50%) scaleX(0.85);transform-origin:100% 50%;">1</div>
<div class="t " style="left:506px;top:233.39999999999998px;font-size:6.896551724137931px;color:#7a7a7a;transform:translate(-100%,-50%) scaleX(0.85);transform-origin:100% 50%;">Interval (mm)</div>
<div style="left:508.3px;top:227.3px;width:32px;height:10.2px;background:#ebebeb;border:0.8px solid #cfcfcf;border-radius:1.5px"></div>
<div style="left:533.0999999999999px;top:228.10000000000002px;width:0.8px;height:8.6px;background:#d6d6d6"></div>
<svg width="4" height="10.2" style="left:534.6999999999999px;top:227.3px"><path d="M0.8 3.8999999999999995 L2 2.4999999999999996 L3.2 3.8999999999999995" fill="none" stroke="#666" stroke-width="0.7"/><path d="M0.8 6.3 L2 7.699999999999999 L3.2 6.3" fill="none" stroke="#666" stroke-width="0.7"/></svg>
<div class="t " style="left:531.3px;top:233.1px;font-size:6.896551724137931px;color:#7a7a7a;transform:translate(-100%,-50%) scaleX(0.85);transform-origin:100% 50%;">0,100</div>
<div class="t " style="left:543.8px;top:209.2px;font-size:6.896551724137931px;color:#7a7a7a;transform:translateY(-50%) scaleX(0.85);transform-origin:0 50%;">Speed (mm/m)</div>
<div style="left:586.3px;top:202.8px;width:34px;height:10.2px;background:#ebebeb;border:0.8px solid #cfcfcf;border-radius:1.5px"></div>
<div style="left:613.0999999999999px;top:203.60000000000002px;width:0.8px;height:8.6px;background:#d6d6d6"></div>
<svg width="4" height="10.2" style="left:614.6999999999999px;top:202.8px"><path d="M0.8 3.8999999999999995 L2 2.4999999999999996 L3.2 3.8999999999999995" fill="none" stroke="#666" stroke-width="0.7"/><path d="M0.8 6.3 L2 7.699999999999999 L3.2 6.3" fill="none" stroke="#666" stroke-width="0.7"/></svg>
<div class="t " style="left:611.3px;top:208.6px;font-size:6.896551724137931px;color:#7a7a7a;transform:translate(-100%,-50%) scaleX(0.85);transform-origin:100% 50%;">72,0</div>
<div class="t " style="left:543.8px;top:221.2px;font-size:6.896551724137931px;color:#7a7a7a;transform:translateY(-50%) scaleX(0.85);transform-origin:0 50%;">Power Max (%)</div>
<div style="left:586.3px;top:215.7px;width:34px;height:9.6px;background:#ebebeb;border:0.8px solid #cfcfcf;border-radius:1.5px"></div>
<div style="left:613.0999999999999px;top:216.5px;width:0.8px;height:8.0px;background:#d6d6d6"></div>
<svg width="4" height="9.6" style="left:614.6999999999999px;top:215.7px"><path d="M0.8 3.5999999999999996 L2 2.1999999999999997 L3.2 3.5999999999999996" fill="none" stroke="#666" stroke-width="0.7"/><path d="M0.8 6.0 L2 7.4 L3.2 6.0" fill="none" stroke="#666" stroke-width="0.7"/></svg>
<div class="t " style="left:611.3px;top:221.2px;font-size:6.896551724137931px;color:#7a7a7a;transform:translate(-100%,-50%) scaleX(0.85);transform-origin:100% 50%;">0,00</div>
<div style="left:427.8px;top:241.7px;width:44.39999999999998px;height:12.300000000000011px;background:#fcfcfc;border:0.8px solid #d0d0d0;border-bottom:none"></div>
<div class="t " style="left:450.0px;top:249.1px;font-size:6.896551724137931px;color:#111;transform:translate(-50%,-50%) scaleX(0.85);transform-origin:50% 50%;">Cuts / Layers</div>
<div style="left:472.2px;top:242.7px;width:33.400000000000034px;height:11.300000000000011px;background:#e6e6e6;border:0.8px solid #d4d4d4"></div>
<div class="t " style="left:488.9px;top:249.1px;font-size:6.896551724137931px;color:#111;transform:translate(-50%,-50%) scaleX(0.85);transform-origin:50% 50%;">Console</div>
<div style="left:505.6px;top:242.7px;width:44.19999999999993px;height:11.300000000000011px;background:#e6e6e6;border:0.8px solid #d4d4d4"></div>
<div class="t " style="left:527.7px;top:249.1px;font-size:6.896551724137931px;color:#111;transform:translate(-50%,-50%) scaleX(0.85);transform-origin:50% 50%;">Variable Text</div>
<div style="left:549.8px;top:242.7px;width:28.5px;height:11.300000000000011px;background:#e6e6e6;border:0.8px solid #d4d4d4"></div>
<div class="t " style="left:564.05px;top:249.1px;font-size:6.896551724137931px;color:#111;transform:translate(-50%,-50%) scaleX(0.85);transform-origin:50% 50%;">Move</div>
<div style="left:578.3px;top:242.7px;width:30.700000000000045px;height:11.300000000000011px;background:#e6e6e6;border:0.8px solid #d4d4d4"></div>
<div class="t " style="left:593.65px;top:249.1px;font-size:6.896551724137931px;color:#111;transform:translate(-50%,-50%) scaleX(0.85);transform-origin:50% 50%;">Macros</div>
<div style="left:427px;top:258.4px;width:198px;height:8.8px;background:linear-gradient(90deg,#000 0%,#1c0404 10%,#5a0f10 30%,#a02222 48%,#c43230 62%,#cf4a30 80%,#e27a30 100%)"></div>
<div class="t " style="left:430px;top:263.7px;font-size:6.896551724137931px;color:#fff;transform:translateY(-50%) scaleX(0.85);transform-origin:0 50%;">Laser</div>
<svg width="16" height="8" style="left:608px;top:258.9px"><rect x="0.5" y="1.5" width="6" height="5" fill="none" stroke="#c98a5e" stroke-width="0.6"/><rect x="8" y="1.5" width="6" height="5" fill="none" stroke="#c98a5e" stroke-width="0.6"/><path d="M9 2.5 L13 5.5 M13 2.5 L9 5.5" stroke="#c98a5e" stroke-width="0.5"/></svg>
<div class="t " style="left:428px;top:273.2px;font-size:6.896551724137931px;color:#222;transform:translateY(-50%) scaleX(0.85);transform-origin:0 50%;">Ready</div>
<div style="left:427.2px;top:278.3px;width:64.5px;height:26.899999999999977px;background:linear-gradient(#fafafa,#efefef);border:0.8px solid #d2d2d2;border-radius:1.2px;box-shadow:0 0.6px 0 #c4c4c4"></div>
<svg width="9" height="9" viewBox="0 0 9 9" style="left:447px;top:287.5px"><rect x="0.6" y="0" width="2.4" height="8.6" fill="#111"/><rect x="4.6" y="0" width="2.4" height="8.6" fill="#111"/></svg>
<div class="t " style="left:455.5px;top:292.59999999999997px;font-size:6.896551724137931px;color:#111;transform:translateY(-50%) scaleX(0.85);transform-origin:0 50%;">Pause</div>
<div style="left:493.2px;top:278.3px;width:65.50000000000006px;height:26.899999999999977px;background:linear-gradient(#fafafa,#efefef);border:0.8px solid #d2d2d2;border-radius:1.2px;box-shadow:0 0.6px 0 #c4c4c4"></div>
<svg width="8" height="8.5" viewBox="0 0 8 8.5" style="left:515px;top:288px"><rect x="0" y="0" width="7.6" height="8.2" fill="#111"/></svg>
<div class="t " style="left:523px;top:292.59999999999997px;font-size:6.896551724137931px;color:#111;transform:translateY(-50%) scaleX(0.85);transform-origin:0 50%;">Stop</div>
<div style="left:560.8px;top:278.3px;width:63.5px;height:26.899999999999977px;background:linear-gradient(#fafafa,#efefef);border:0.8px solid #d2d2d2;border-radius:1.2px;box-shadow:0 0.6px 0 #c4c4c4"></div>
<svg width="8" height="9" viewBox="0 0 8 9" style="left:582px;top:288px"><path d="M0 0 L7 4.2 L0 8.4 Z" fill="#777"/></svg>
<div class="t " style="left:590px;top:292.59999999999997px;font-size:6.896551724137931px;color:#888;transform:translateY(-50%) scaleX(0.85);transform-origin:0 50%;">Start</div>
<div style="left:427.2px;top:306.8px;width:48.5px;height:26.899999999999977px;background:linear-gradient(#fafafa,#efefef);border:0.8px solid #d2d2d2;border-radius:1.2px;box-shadow:0 0.6px 0 #c4c4c4"></div>
<svg width="10" height="10" viewBox="0 0 10 10" style="left:440px;top:315.5px"><path d="M0.6 2.6 V0.6 H2.6 M6.4 0.6 H8.4 V2.6 M8.4 6.4 V8.4 H6.4 M2.6 8.4 H0.6 V6.4" fill="none" stroke="#111" stroke-width="1.3"/><path d="M3.5 0.6 H5.5 M3.5 8.4 H5.5 M0.6 3.5 V5.5 M8.4 3.5 V5.5" stroke="#111" stroke-width="1.2"/></svg>
<div class="t " style="left:450px;top:321.0px;font-size:6.896551724137931px;color:#111;transform:translateY(-50%) scaleX(0.85);transform-origin:0 50%;">Frame</div>
<div style="left:477.3px;top:306.8px;width:47.30000000000001px;height:26.899999999999977px;background:linear-gradient(#fafafa,#efefef);border:0.8px solid #d2d2d2;border-radius:1.2px;box-shadow:0 0.6px 0 #c4c4c4"></div>
<svg width="10" height="10" viewBox="0 0 10 10" style="left:490px;top:315.5px"><circle cx="4.5" cy="4.5" r="3.8" fill="none" stroke="#111" stroke-width="1.3" stroke-dasharray="2,1.1"/></svg>
<div class="t " style="left:499.5px;top:321.0px;font-size:6.896551724137931px;color:#111;transform:translateY(-50%) scaleX(0.85);transform-origin:0 50%;">Frame</div>
<div style="left:527.8px;top:306.8px;width:46.40000000000009px;height:26.899999999999977px;background:linear-gradient(#fafafa,#efefef);border:0.8px solid #d2d2d2;border-radius:1.2px;box-shadow:0 0.6px 0 #c4c4c4"></div>
<div class="t " style="left:551px;top:321.0px;font-size:6.896551724137931px;color:#111;transform:translate(-50%,-50%) scaleX(0.85);transform-origin:50% 50%;">Save GCode</div>
<div style="left:577.5px;top:306.8px;width:46.799999999999955px;height:26.899999999999977px;background:linear-gradient(#fafafa,#efefef);border:0.8px solid #d2d2d2;border-radius:1.2px;box-shadow:0 0.6px 0 #c4c4c4"></div>
<div class="t " style="left:600.9px;top:321.0px;font-size:6.896551724137931px;color:#111;transform:translate(-50%,-50%) scaleX(0.85);transform-origin:50% 50%;">Run GCode</div>
<div style="left:428.3px;top:335.3px;width:42.599999999999966px;height:11.199999999999989px;background:linear-gradient(#fafafa,#efefef);border:0.8px solid #d2d2d2;border-radius:1.2px;box-shadow:0 0.6px 0 #c4c4c4"></div>
<svg width="9" height="8" viewBox="0 0 9 8" style="left:440.5px;top:336.8px"><path d="M4.2 0.5 L0.5 3.8 H1.6 V7.6 H6.8 V3.8 H7.9 Z" fill="none" stroke="#111" stroke-width="1.1"/><rect x="3.3" y="4.6" width="1.8" height="3" fill="#111"/></svg>
<div class="t " style="left:449.5px;top:341.3px;font-size:6.896551724137931px;color:#111;transform:translateY(-50%) scaleX(0.85);transform-origin:0 50%;">Home</div>
<div style="left:474.4px;top:335.3px;width:43.200000000000045px;height:11.199999999999989px;background:linear-gradient(#fafafa,#efefef);border:0.8px solid #d2d2d2;border-radius:1.2px;box-shadow:0 0.6px 0 #c4c4c4"></div>
<div class="t " style="left:496px;top:341.3px;font-size:6.896551724137931px;color:#111;transform:translate(-50%,-50%) scaleX(0.85);transform-origin:50% 50%;">Go to Origin</div>
<div class="t " style="left:564.5px;top:341.3px;font-size:6.896551724137931px;color:#222;transform:translate(-100%,-50%) scaleX(0.85);transform-origin:100% 50%;">Start From:</div>
<div style="left:567.7px;top:336.3px;width:55px;height:10px;background:linear-gradient(#fafafa,#f0f0f0);border:0.8px solid #d0d0d0;border-radius:1px"></div>
<svg width="5" height="4" style="left:617px;top:340px"><path d="M0.3 0.5 H4 L2.15 2.6 Z" fill="#333"/></svg>
<div class="t " style="left:570px;top:341.3px;font-size:6.896551724137931px;color:#111;transform:translateY(-50%) scaleX(0.85);transform-origin:0 50%;">Current Position</div>
<div class="t " style="left:564.5px;top:360.7px;font-size:6.896551724137931px;color:#222;transform:translate(-100%,-50%) scaleX(0.85);transform-origin:100% 50%;">Job Origin</div>
<div style="left:568.6px;top:348px;width:56.4px;height:24.3px;background:#e9e9e9"></div>
<svg width="625" height="380" style="left:0;top:0"><circle cx="573.5" cy="352.5" r="2.7" fill="#fff" stroke="#8a8a8a" stroke-width="0.6"/><circle cx="591" cy="352.5" r="2.7" fill="#fff" stroke="#8a8a8a" stroke-width="0.6"/><circle cx="608" cy="352.5" r="2.7" fill="#fff" stroke="#8a8a8a" stroke-width="0.6"/><circle cx="573.5" cy="359.6" r="2.7" fill="#fff" stroke="#8a8a8a" stroke-width="0.6"/><circle cx="591" cy="359.6" r="2.7" fill="#fff" stroke="#8a8a8a" stroke-width="0.6"/><circle cx="608" cy="359.6" r="2.7" fill="#fff" stroke="#8a8a8a" stroke-width="0.6"/><circle cx="573.5" cy="366.8" r="2.7" fill="#fff" stroke="#8a8a8a" stroke-width="0.6"/><circle cx="591" cy="366.8" r="2.7" fill="#fff" stroke="#8a8a8a" stroke-width="0.6"/><circle cx="608" cy="366.8" r="2.7" fill="#fff" stroke="#8a8a8a" stroke-width="0.6"/><circle cx="573.5" cy="366.8" r="1" fill="#111"/></svg>
<svg width="10" height="6" style="left:427.6px;top:376.5px"><rect x="0.4" y="0.4" width="8.2" height="4.8" rx="1.8" fill="#22c022" stroke="#3a3a3a" stroke-width="0.7"/><rect x="4.6" y="0.6" width="3.8" height="4.4" rx="1.6" fill="#f4f4f4" stroke="#3a3a3a" stroke-width="0.8"/></svg>
<div class="t " style="left:438.5px;top:380.0px;font-size:6.896551724137931px;color:#222;transform:translateY(-50%) scaleX(0.85);transform-origin:0 50%;">Cut Selected Graphics</div>
<svg width="10" height="6" style="left:427.6px;top:387.7px"><rect x="0.4" y="0.4" width="8.2" height="4.8" rx="1.8" fill="#7a1616" stroke="#3a3a3a" stroke-width="0.7"/><rect x="0.6" y="0.6" width="3.8" height="4.4" rx="1.6" fill="#f4f4f4" stroke="#3a3a3a" stroke-width="0.8"/></svg>
<div class="t " style="left:438.5px;top:391.8px;font-size:6.896551724137931px;color:#222;transform:translateY(-50%) scaleX(0.85);transform-origin:0 50%;">Use Selection Origin</div>
<div style="left:521.8px;top:373.8px;width:101.80000000000007px;height:10.199999999999989px;background:linear-gradient(#fafafa,#efefef);border:0.8px solid #d2d2d2;border-radius:1.2px;box-shadow:0 0.6px 0 #c4c4c4"></div>
<svg width="9" height="9" viewBox="0 0 9 9" style="left:542.8px;top:374.2px"><path d="M4.5 1 V8 M1 4.5 H8" stroke="#b04050" stroke-width="0.6"/><circle cx="4.5" cy="4.5" r="1" fill="#a01830"/><circle cx="4.5" cy="1.2" r="0.65" fill="#222"/><circle cx="4.5" cy="7.8" r="0.65" fill="#222"/><circle cx="1.2" cy="4.5" r="0.65" fill="#222"/><circle cx="7.8" cy="4.5" r="0.65" fill="#222"/></svg>
<div class="t " style="left:552.5px;top:380.0px;font-size:6.896551724137931px;color:#111;transform:translateY(-50%) scaleX(0.85);transform-origin:0 50%;">Show Last Position</div>
<div style="left:521.8px;top:385.9px;width:101.80000000000007px;height:9.900000000000034px;background:linear-gradient(#fafafa,#efefef);border:0.8px solid #d2d2d2;border-radius:1.2px;box-shadow:0 0.6px 0 #c4c4c4"></div>
<div class="t " style="left:572.7px;top:391.8px;font-size:6.896551724137931px;color:#111;transform:translate(-50%,-50%) scaleX(0.85);transform-origin:50% 50%;">Optimization Settings</div>
<div style="left:428px;top:397.4px;width:38px;height:10.600000000000023px;background:linear-gradient(#fafafa,#efefef);border:0.8px solid #d2d2d2;border-radius:1.2px;box-shadow:0 0.6px 0 #c4c4c4"></div>
<div class="t " style="left:447px;top:403.59999999999997px;font-size:6.896551724137931px;color:#111;transform:translate(-50%,-50%) scaleX(0.85);transform-origin:50% 50%;">Devices</div>
<div style="left:470px;top:397.6px;width:75.2px;height:10.8px;background:linear-gradient(#fafafa,#f0f0f0);border:0.8px solid #d0d0d0;border-radius:1px"></div>
<svg width="5" height="4" style="left:539.5px;top:401.6px"><path d="M0.3 0.5 H4 L2.15 2.6 Z" fill="#333"/></svg>
<div class="t " style="left:472.5px;top:403.7px;font-size:6.896551724137931px;color:#111;transform:translateY(-50%) scaleX(0.85);transform-origin:0 50%;">COM7</div>
<div style="left:549.4px;top:397.6px;width:73.6px;height:10.8px;background:linear-gradient(#fafafa,#f0f0f0);border:0.8px solid #d0d0d0;border-radius:1px"></div>
<svg width="5" height="4" style="left:617px;top:401.6px"><path d="M0.3 0.5 H4 L2.15 2.6 Z" fill="#333"/></svg>
<div class="t " style="left:551.5px;top:402.9px;font-size:5.057471264367816px;color:#333;transform:translateY(-50%) scaleX(0.9);transform-origin:0 50%;">φM</div>
<div class="t " style="left:560px;top:403.7px;font-size:6.896551724137931px;color:#111;transform:translateY(-50%) scaleX(0.85);transform-origin:0 50%;">GRBL-M3</div>
<div style="left:428px;top:438.4px;width:24.5px;height:12.700000000000045px;background:#fcfcfc;border:0.8px solid #d0d0d0;border-bottom:none"></div>
<div class="t " style="left:440.25px;top:446.0px;font-size:6.896551724137931px;color:#111;transform:translate(-50%,-50%) scaleX(0.85);transform-origin:50% 50%;">Laser</div>
<div style="left:452.5px;top:439.4px;width:54.80000000000001px;height:11.700000000000045px;background:#e6e6e6;border:0.8px solid #d4d4d4"></div>
<div class="t " style="left:479.9px;top:446.0px;font-size:6.896551724137931px;color:#111;transform:translate(-50%,-50%) scaleX(0.85);transform-origin:50% 50%;">Shape Properties</div>
<div style="left:507.3px;top:439.4px;width:51.69999999999999px;height:11.700000000000045px;background:#e6e6e6;border:0.8px solid #d4d4d4"></div>
<div class="t " style="left:533.15px;top:446.0px;font-size:6.896551724137931px;color:#111;transform:translate(-50%,-50%) scaleX(0.85);transform-origin:50% 50%;">Material Library</div>
<div style="left:6.25px;top:454.3px;width:12px;height:11.1px;background:#dedede;border:0.8px solid #c6c6c6;border-radius:1px"></div>
<svg width="7" height="9" viewBox="0 0 7 9" style="left:9.8px;top:455.5px"><path d="M0.6 0.6 L0.6 7 L2.3 5.5 L3.6 8.2 L4.8 7.6 L3.6 5 L5.8 5 Z" fill="#f2f2f2" stroke="#111" stroke-width="0.9" stroke-linejoin="round"/></svg>
<svg width="8" height="9" viewBox="0 0 8 9" style="left:22.8px;top:455.6px"><path d="M5.2 0.3 L7.2 1.6 L2.6 7.4 L0.6 8.6 L0.7 6.2 Z" fill="#111"/><path d="M0.9 7.2 L1.9 7.9" stroke="#aaa" stroke-width="0.6"/></svg>
<svg width="9" height="9" viewBox="0 0 9 9" style="left:35px;top:455.8px"><rect x="0.9" y="0.9" width="6.8" height="6.8" fill="none" stroke="#111" stroke-width="1.6"/><path d="M7.9 3.5 V7.9 H3.5" fill="none" stroke="#1fc0c8" stroke-width="0.9"/></svg>
<svg width="10" height="9" viewBox="0 0 10 9" style="left:48px;top:455.5px"><path d="M0.8 3 L3.6 0.7 L7.2 1.6 L8.6 4.8 L6.2 7.8 L0.8 7.8 Z" fill="none" stroke="#111" stroke-width="1.1" stroke-linejoin="round"/></svg>
<svg width="9" height="9" viewBox="0 0 9 9" style="left:61.2px;top:455.8px"><path d="M0.4 4.8 Q3.4 4.6 4.2 1.4 M4.4 8.4 Q4.8 5.2 8.4 4.6" fill="none" stroke="#222" stroke-width="1.1"/><circle cx="4.3" cy="0.9" r="0.9" fill="#222"/><circle cx="8.4" cy="4.5" r="0.9" fill="#222"/><circle cx="4.4" cy="4.6" r="1.1" fill="#222"/><path d="M1 7.6 L3 6" stroke="#999" stroke-width="0.7"/></svg>
<svg width="9" height="9" viewBox="0 0 9 9" style="left:73.5px;top:455.5px"><path d="M0.6 0.6 H8.4 M0.6 2.2 V8.4 H3 M6 8.4 H8.4 V2.2" fill="none" stroke="#333" stroke-width="1.1"/></svg>
<svg width="7" height="7" viewBox="0 0 7 7" style="left:88.4px;top:456.8px"><path d="M0 6.2 L2.3 0.2 H3.9 L6.2 6.2 H4.6 L4.15 4.9 H2.05 L1.6 6.2 Z M2.45 3.7 H3.75 L3.1 1.9 Z" fill="#111" fill-rule="evenodd"/></svg>
<svg width="7" height="9.5" viewBox="0 0 7 9.5" style="left:101.5px;top:455.5px"><path d="M3.3 9 C1.5 6 0.4 4.8 0.4 3.2 A2.9 2.9 0 0 1 6.2 3.2 C6.2 4.8 5 6 3.3 9 Z" fill="#111"/><circle cx="3.3" cy="3.1" r="1.1" fill="#f0f0f0"/></svg>
<svg width="9" height="9" viewBox="0 0 9 9" style="left:113.8px;top:455.5px"><path d="M1.2 8 L8 1.2" stroke="#333" stroke-width="2.8"/><path d="M1.2 8 L8 1.2" stroke="#f0f0f0" stroke-width="1.3"/><path d="M2.6 6.6 L3.2 7.2 M4 5.2 L4.6 5.8 M5.4 3.8 L6 4.4" stroke="#333" stroke-width="0.6"/></svg>
<svg width="9" height="9" viewBox="0 0 9 9" style="left:135px;top:455.5px"><ellipse cx="4.2" cy="4.4" rx="3.1" ry="3.3" fill="none" stroke="#7a7a7a" stroke-width="2"/></svg>
<svg width="9" height="9" viewBox="0 0 9 9" style="left:152.3px;top:455.5px"><path d="M2.5 0.8 H7.8 V6 L5.8 8.2 H0.8 V2.6 Z M2.5 0.8 V2.6 H0.8" fill="none" stroke="#999" stroke-width="1"/></svg>
<svg width="9" height="9" viewBox="0 0 9 9" style="left:165px;top:455.5px"><rect x="0.7" y="0.7" width="5" height="5" fill="none" stroke="#555" stroke-width="0.9"/><rect x="3" y="3" width="5" height="5" fill="#bbb" stroke="#555" stroke-width="0.9"/></svg>
<svg width="9" height="9" viewBox="0 0 9 9" style="left:181.5px;top:455.8px"><rect x="0.4" y="0.4" width="1.9" height="1.9" fill="#111"/><rect x="0.4" y="3.6999999999999997" width="1.9" height="1.9" fill="#111"/><rect x="0.4" y="7.0" width="1.9" height="1.9" fill="#111"/><rect x="3.6999999999999997" y="0.4" width="1.9" height="1.9" fill="#111"/><rect x="3.6999999999999997" y="3.6999999999999997" width="1.9" height="1.9" fill="#111"/><rect x="3.6999999999999997" y="7.0" width="1.9" height="1.9" fill="#111"/><rect x="7.0" y="0.4" width="1.9" height="1.9" fill="#111"/><rect x="7.0" y="3.6999999999999997" width="1.9" height="1.9" fill="#111"/><rect x="7.0" y="7.0" width="1.9" height="1.9" fill="#111"/></svg>
<svg width="9" height="9" viewBox="0 0 9 9" style="left:194.6px;top:455.5px"><circle cx="4.4" cy="4.4" r="2.8" fill="none" stroke="#666" stroke-width="1.3"/><circle cx="4.4" cy="4.4" r="3.8" fill="none" stroke="#666" stroke-width="1.1" stroke-dasharray="1,1.0"/></svg>
<svg width="10" height="9" viewBox="0 0 10 9" style="left:211.2px;top:455.5px"><path d="M0.7 3 L3.4 0.8 H6.5 L8.6 4.3 L6.5 7.8 H0.7 Z" fill="none" stroke="#333" stroke-width="1"/></svg>
<svg width="10" height="9" viewBox="0 0 10 9" style="left:224px;top:455.5px"><path d="M0.7 7.8 V4 Q0.7 0.8 4 0.8 H8.3 V7.8 Z" fill="none" stroke="#333" stroke-width="1"/></svg>
<div class="t " style="left:235px;top:460.9px;font-size:6.896551724137931px;color:#111;transform:translateY(-50%) scaleX(0.85);transform-origin:0 50%;">Radius:</div>
<div style="left:254.1px;top:454.7px;width:31.3px;height:10.4px;background:#ebebeb;border:0.8px solid #cfcfcf;border-radius:1.5px"></div>
<div style="left:278.2px;top:455.5px;width:0.8px;height:8.8px;background:#d6d6d6"></div>
<svg width="4" height="10.4" style="left:279.79999999999995px;top:454.7px"><path d="M0.8 4.0 L2 2.6 L3.2 4.0" fill="none" stroke="#666" stroke-width="0.7"/><path d="M0.8 6.4 L2 7.800000000000001 L3.2 6.4" fill="none" stroke="#666" stroke-width="0.7"/></svg>
<div class="t " style="left:257.1px;top:460.59999999999997px;font-size:6.896551724137931px;color:#888;transform:translateY(-50%) scaleX(0.85);transform-origin:0 50%;">5,0</div>
<div style="left:294.4px;top:454px;width:11.8px;height:11.4px;background:#fff;border:0.8px solid #cfcfcf"></div>
<div style="left:296.00px;top:455.6px;width:9px;height:8.6px;background:#000000;border:0.5px solid rgba(0,0,0,0.18)"></div>
<div class="t" style="left:300.50px;top:460.3px;font-size:5.4px;color:#ddd;transform:translate(-50%,-50%) scaleX(0.8);-webkit-text-stroke:0">00</div>
<div style="left:309.19px;top:455.6px;width:9px;height:8.6px;background:#0000ff;border:0.5px solid rgba(0,0,0,0.18)"></div>
<div class="t" style="left:313.69px;top:460.3px;font-size:5.4px;color:#ddd;transform:translate(-50%,-50%) scaleX(0.8);-webkit-text-stroke:0">01</div>
<div style="left:322.38px;top:455.6px;width:9px;height:8.6px;background:#ff0000;border:0.5px solid rgba(0,0,0,0.18)"></div>
<div class="t" style="left:326.88px;top:460.3px;font-size:5.4px;color:#fdd;transform:translate(-50%,-50%) scaleX(0.8);-webkit-text-stroke:0">02</div>
<div style="left:335.57px;top:455.6px;width:9px;height:8.6px;background:#00e000;border:0.5px solid rgba(0,0,0,0.18)"></div>
<div class="t" style="left:340.07px;top:460.3px;font-size:5.4px;color:#063;transform:translate(-50%,-50%) scaleX(0.8);-webkit-text-stroke:0">03</div>
<div style="left:348.76px;top:455.6px;width:9px;height:8.6px;background:#d0d000;border:0.5px solid rgba(0,0,0,0.18)"></div>
<div class="t" style="left:353.26px;top:460.3px;font-size:5.4px;color:#440;transform:translate(-50%,-50%) scaleX(0.8);-webkit-text-stroke:0">04</div>
<div style="left:361.95px;top:455.6px;width:9px;height:8.6px;background:#ff8000;border:0.5px solid rgba(0,0,0,0.18)"></div>
<div class="t" style="left:366.45px;top:460.3px;font-size:5.4px;color:#530;transform:translate(-50%,-50%) scaleX(0.8);-webkit-text-stroke:0">05</div>
<div style="left:375.14px;top:455.6px;width:9px;height:8.6px;background:#00e0e0;border:0.5px solid rgba(0,0,0,0.18)"></div>
<div class="t" style="left:379.64px;top:460.3px;font-size:5.4px;color:#055;transform:translate(-50%,-50%) scaleX(0.8);-webkit-text-stroke:0">06</div>
<div style="left:388.33px;top:455.6px;width:9px;height:8.6px;background:#ff00ff;border:0.5px solid rgba(0,0,0,0.18)"></div>
<div class="t" style="left:392.83px;top:460.3px;font-size:5.4px;color:#fdf;transform:translate(-50%,-50%) scaleX(0.8);-webkit-text-stroke:0">07</div>
<div style="left:401.52px;top:455.6px;width:9px;height:8.6px;background:#b4b4b4;border:0.5px solid rgba(0,0,0,0.18)"></div>
<div class="t" style="left:406.02px;top:460.3px;font-size:5.4px;color:#333;transform:translate(-50%,-50%) scaleX(0.8);-webkit-text-stroke:0">08</div>
<div style="left:414.71px;top:455.6px;width:9px;height:8.6px;background:#0000a0;border:0.5px solid rgba(0,0,0,0.18)"></div>
<div class="t" style="left:419.21px;top:460.3px;font-size:5.4px;color:#ccf;transform:translate(-50%,-50%) scaleX(0.8);-webkit-text-stroke:0">09</div>
<div style="left:427.90px;top:455.6px;width:9px;height:8.6px;background:#a00000;border:0.5px solid rgba(0,0,0,0.18)"></div>
<div class="t" style="left:432.40px;top:460.3px;font-size:5.4px;color:#fcc;transform:translate(-50%,-50%) scaleX(0.8);-webkit-text-stroke:0">10</div>
<div style="left:441.09px;top:455.6px;width:9px;height:8.6px;background:#00a000;border:0.5px solid rgba(0,0,0,0.18)"></div>
<div class="t" style="left:445.59px;top:460.3px;font-size:5.4px;color:#030;transform:translate(-50%,-50%) scaleX(0.8);-webkit-text-stroke:0">11</div>
<div style="left:454.28px;top:455.6px;width:9px;height:8.6px;background:#a0a000;border:0.5px solid rgba(0,0,0,0.18)"></div>
<div class="t" style="left:458.78px;top:460.3px;font-size:5.4px;color:#330;transform:translate(-50%,-50%) scaleX(0.8);-webkit-text-stroke:0">12</div>
<div style="left:467.47px;top:455.6px;width:9px;height:8.6px;background:#c08000;border:0.5px solid rgba(0,0,0,0.18)"></div>
<div class="t" style="left:471.97px;top:460.3px;font-size:5.4px;color:#320;transform:translate(-50%,-50%) scaleX(0.8);-webkit-text-stroke:0">13</div>
<div style="left:480.66px;top:455.6px;width:9px;height:8.6px;background:#00a0ff;border:0.5px solid rgba(0,0,0,0.18)"></div>
<div class="t" style="left:485.16px;top:460.3px;font-size:5.4px;color:#eff;transform:translate(-50%,-50%) scaleX(0.8);-webkit-text-stroke:0">14</div>
<div style="left:493.85px;top:455.6px;width:9px;height:8.6px;background:#a000a0;border:0.5px solid rgba(0,0,0,0.18)"></div>
<div class="t" style="left:498.35px;top:460.3px;font-size:5.4px;color:#fdf;transform:translate(-50%,-50%) scaleX(0.8);-webkit-text-stroke:0">15</div>
<div style="left:507.04px;top:455.6px;width:9px;height:8.6px;background:#808080;border:0.5px solid rgba(0,0,0,0.18)"></div>
<div class="t" style="left:511.54px;top:460.3px;font-size:5.4px;color:#222;transform:translate(-50%,-50%) scaleX(0.8);-webkit-text-stroke:0">16</div>
<div style="left:520.23px;top:455.6px;width:9px;height:8.6px;background:#7d87b9;border:0.5px solid rgba(0,0,0,0.18)"></div>
<div class="t" style="left:524.73px;top:460.3px;font-size:5.4px;color:#eef;transform:translate(-50%,-50%) scaleX(0.8);-webkit-text-stroke:0">17</div>
<div style="left:533.42px;top:455.6px;width:9px;height:8.6px;background:#bb7784;border:0.5px solid rgba(0,0,0,0.18)"></div>
<div class="t" style="left:537.92px;top:460.3px;font-size:5.4px;color:#fee;transform:translate(-50%,-50%) scaleX(0.8);-webkit-text-stroke:0">18</div>
<div style="left:546.61px;top:455.6px;width:9px;height:8.6px;background:#4a6fe3;border:0.5px solid rgba(0,0,0,0.18)"></div>
<div class="t" style="left:551.11px;top:460.3px;font-size:5.4px;color:#eef;transform:translate(-50%,-50%) scaleX(0.8);-webkit-text-stroke:0">19</div>
<div style="left:559.80px;top:455.6px;width:9px;height:8.6px;background:#d33f6a;border:0.5px solid rgba(0,0,0,0.18)"></div>
<div class="t" style="left:564.30px;top:460.3px;font-size:5.4px;color:#fee;transform:translate(-50%,-50%) scaleX(0.8);-webkit-text-stroke:0">20</div>
<div style="left:572.99px;top:455.6px;width:9px;height:8.6px;background:#8cd78c;border:0.5px solid rgba(0,0,0,0.18)"></div>
<div class="t" style="left:577.49px;top:460.3px;font-size:5.4px;color:#131;transform:translate(-50%,-50%) scaleX(0.8);-webkit-text-stroke:0">21</div>
<div style="left:586.18px;top:455.6px;width:9px;height:8.6px;background:#f0b98d;border:0.5px solid rgba(0,0,0,0.18)"></div>
<div class="t" style="left:590.68px;top:460.3px;font-size:5.4px;color:#432;transform:translate(-50%,-50%) scaleX(0.8);-webkit-text-stroke:0">22</div>
<div style="left:599.37px;top:455.6px;width:9px;height:8.6px;background:#f6c4e1;border:0.5px solid rgba(0,0,0,0.18)"></div>
<div class="t" style="left:603.87px;top:460.3px;font-size:5.4px;color:#535;transform:translate(-50%,-50%) scaleX(0.8);-webkit-text-stroke:0">23</div>
<svg width="6" height="5" viewBox="0 0 6 5" style="left:617.6px;top:458.1px"><path d="M0.6 0.6 L2.4 2.2 L0.6 3.8 M3 0.6 L4.8 2.2 L3 3.8" fill="none" stroke="#444" stroke-width="0.8"/></svg>
<svg width="10" height="6" style="left:1.3px;top:471.7px"><rect x="0.4" y="0.4" width="8.2" height="4.8" rx="1.8" fill="#22c022" stroke="#3a3a3a" stroke-width="0.7"/><rect x="4.6" y="0.6" width="3.8" height="4.4" rx="1.6" fill="#f4f4f4" stroke="#3a3a3a" stroke-width="0.8"/></svg>
<div class="t " style="left:12.5px;top:475.5px;font-size:6.896551724137931px;color:#222;transform:translateY(-50%) scaleX(0.85);transform-origin:0 50%;">Move</div>
<svg width="10" height="6" style="left:33.3px;top:471.7px"><rect x="0.4" y="0.4" width="8.2" height="4.8" rx="1.8" fill="#22c022" stroke="#3a3a3a" stroke-width="0.7"/><rect x="4.6" y="0.6" width="3.8" height="4.4" rx="1.6" fill="#f4f4f4" stroke="#3a3a3a" stroke-width="0.8"/></svg>
<div class="t " style="left:44.5px;top:475.5px;font-size:6.896551724137931px;color:#222;transform:translateY(-50%) scaleX(0.85);transform-origin:0 50%;">Size</div>
<svg width="10" height="6" style="left:59.3px;top:471.7px"><rect x="0.4" y="0.4" width="8.2" height="4.8" rx="1.8" fill="#22c022" stroke="#3a3a3a" stroke-width="0.7"/><rect x="4.6" y="0.6" width="3.8" height="4.4" rx="1.6" fill="#f4f4f4" stroke="#3a3a3a" stroke-width="0.8"/></svg>
<div class="t " style="left:70.5px;top:475.5px;font-size:6.896551724137931px;color:#222;transform:translateY(-50%) scaleX(0.85);transform-origin:0 50%;">Rotate</div>
<svg width="10" height="6" style="left:93.3px;top:471.7px"><rect x="0.4" y="0.4" width="8.2" height="4.8" rx="1.8" fill="#22c022" stroke="#3a3a3a" stroke-width="0.7"/><rect x="4.6" y="0.6" width="3.8" height="4.4" rx="1.6" fill="#f4f4f4" stroke="#3a3a3a" stroke-width="0.8"/></svg>
<div class="t " style="left:104.5px;top:475.5px;font-size:6.896551724137931px;color:#222;transform:translateY(-50%) scaleX(0.85);transform-origin:0 50%;">Shear</div>
<div class="t " style="left:128px;top:475.5px;font-size:6.896551724137931px;color:#222;transform:translateY(-50%) scaleX(0.85);transform-origin:0 50%;">x: 52,00, y: 323,00 mm</div>
<div style="left:0px;top:480.3px;width:23.5px;height:19.7px;background:#141414"></div>
<svg width="9" height="8" viewBox="0 0 9 8" style="left:8px;top:486.8px"><rect x="0" y="0" width="3.7" height="3.4" fill="#fff"/><rect x="4.3" y="0" width="3.9" height="3.4" fill="#fff"/><rect x="0" y="4" width="3.7" height="3.6" fill="#fff"/><rect x="4.3" y="4" width="3.9" height="3.6" fill="#fff"/></svg>
<div style="left:23.5px;top:480.8px;width:140px;height:19.2px;background:#f3f3f3"></div>
<svg width="9" height="9" viewBox="0 0 9 9" style="left:29px;top:485.5px"><circle cx="5.2" cy="3.6" r="2.7" fill="none" stroke="#333" stroke-width="0.9"/><path d="M3.2 5.6 L0.6 8.4" stroke="#333" stroke-width="1"/></svg>
<div class="t " style="left:43px;top:491.7px;font-size:7.35632183908046px;color:#333;transform:translateY(-50%) scaleX(0.85);transform-origin:0 50%;">Procurar</div>
<svg width="8" height="8" viewBox="0 0 8 8" style="left:172px;top:486px"><rect x="0.5" y="1.5" width="4.5" height="5" fill="none" stroke="#ddd" stroke-width="0.8"/><path d="M0 0.5 H7 M0 7.5 H7 M6.5 2 V6" stroke="#ddd" stroke-width="0.8"/></svg>
<svg width="10" height="12" viewBox="0 0 10 12" style="left:196px;top:484.8px"><rect x="0" y="0" width="9.4" height="11" rx="0.8" fill="#6fa3c8"/><rect x="1" y="1" width="7.4" height="2.6" fill="#cfe3f2"/><rect x="1.0" y="4.6" width="1.8" height="1.5" fill="#e8f0f8"/><rect x="1.0" y="6.8" width="1.8" height="1.5" fill="#e8f0f8"/><rect x="1.0" y="9.0" width="1.8" height="1.5" fill="#e8f0f8"/><rect x="3.6" y="4.6" width="1.8" height="1.5" fill="#e8f0f8"/><rect x="3.6" y="6.8" width="1.8" height="1.5" fill="#e8f0f8"/><rect x="3.6" y="9.0" width="1.8" height="1.5" fill="#e8f0f8"/><rect x="6.2" y="4.6" width="1.8" height="1.5" fill="#e8f0f8"/><rect x="6.2" y="6.8" width="1.8" height="1.5" fill="#e8f0f8"/><rect x="6.2" y="9.0" width="1.8" height="1.5" fill="#e8f0f8"/></svg>
<svg width="13" height="13" viewBox="0 0 13 13" style="left:218px;top:484.5px"><circle cx="5.8" cy="6" r="5" fill="#2f6fd6"/><path d="M2.5 7 Q4 3 7.5 3.5 Q6 6 8.5 8.5 Q5 10 2.5 7 Z" fill="#fff"/><circle cx="9.4" cy="9.2" r="2.6" fill="#e0262a"/><text x="9.4" y="10.6" font-size="3.5" fill="#fff" text-anchor="middle" font-family="Liberation Sans">1</text></svg>
<svg width="12" height="12" viewBox="0 0 12 12" style="left:243px;top:484.8px"><circle cx="6" cy="6" r="5.6" fill="#e8453c"/><path d="M6 6 L11.2 4.3 A5.6 5.6 0 0 1 6 11.6 Z" fill="#f9bb2d"/><path d="M6 6 L6 11.6 A5.6 5.6 0 0 1 0.6 4.4 Z" fill="#3ca64f"/><circle cx="6" cy="6" r="2.6" fill="#fff"/><circle cx="6" cy="6" r="1.9" fill="#4386f5"/></svg>
<svg width="13" height="12" viewBox="0 0 13 12" style="left:266px;top:484.8px"><circle cx="6" cy="6" r="5.6" fill="#1b8fd8"/><path d="M3 7.5 Q3 4 6.5 4 Q9 4 9 6.2 H4.8 Q5 8.6 8 8.6 Q10 8.6 11.2 7.5 Q10 11.6 6 11.6 Q3 11.2 3 7.5 Z" fill="#55d06a"/><circle cx="6.6" cy="6.6" r="1.5" fill="#1b8fd8"/></svg>
<svg width="12" height="10" viewBox="0 0 12 10" style="left:291px;top:485.8px"><rect x="0" y="1.2" width="11.5" height="8.3" fill="#f4c64a"/><rect x="0" y="0" width="5" height="2" fill="#e3a92b"/><rect x="2.5" y="5.4" width="6.5" height="2.8" fill="#5aa0dc"/></svg>
<div style="left:309px;top:480.8px;width:23.5px;height:19.2px;background:#3b3b3b"></div>
<svg width="13" height="13" viewBox="0 0 13 13" style="left:313.5px;top:484px"><path d="M1.5 10.5 Q0.8 6 2.5 4 Q6 1 10 2 L11.6 1.2 L11.6 11.6 H4 Z" fill="#9a1020"/><path d="M2 5 Q6 1.6 10.4 4.4" fill="none" stroke="#fff" stroke-width="1.4"/><path d="M3.5 8 Q5 5.6 7.6 6.4 Q9 7.2 8.6 10 Q7 11.6 5.2 10.6 Q6.6 9.4 5.6 8.6 Z" fill="#fff"/></svg>
<div style="left:215px;top:498.6px;width:19px;height:1.4px;background:#8fb8e8"></div>
<div style="left:239px;top:498.6px;width:19px;height:1.4px;background:#8fb8e8"></div>
<div style="left:309.5px;top:498.6px;width:22.5px;height:1.4px;background:#8fb8e8"></div>
<svg width="13" height="12" viewBox="0 0 13 12" style="left:496.5px;top:485.5px"><circle cx="6" cy="6.5" r="5.4" fill="#f2a01e"/><circle cx="9.6" cy="2.6" r="2.4" fill="#d42b2b"/></svg>
<svg width="7" height="5" viewBox="0 0 7 5" style="left:521px;top:487.5px"><path d="M0.5 4.2 L3.3 1 L6.1 4.2" fill="none" stroke="#ddd" stroke-width="0.9"/></svg>
<svg width="8" height="10" viewBox="0 0 8 10" style="left:533px;top:485.5px"><rect x="1" y="3" width="5.5" height="4" fill="none" stroke="#ddd" stroke-width="0.8"/><path d="M3.7 0.5 V3 M2 9 H5.5 M3.7 7 V9" stroke="#ddd" stroke-width="0.8"/></svg>
<svg width="10" height="9" viewBox="0 0 10 9" style="left:543px;top:486px"><rect x="2" y="0.6" width="7" height="5" fill="none" stroke="#ddd" stroke-width="0.8"/><rect x="0.5" y="2.4" width="4.5" height="4" fill="#1c1c1c" stroke="#ddd" stroke-width="0.8"/><path d="M3 7 V8.5 M1 8.5 H5" stroke="#ddd" stroke-width="0.8"/></svg>
<svg width="9" height="9" viewBox="0 0 9 9" style="left:554px;top:486px"><path d="M0.5 3 H2.5 L5 0.8 V8.2 L2.5 6 H0.5 Z" fill="none" stroke="#ddd" stroke-width="0.8"/><path d="M6.3 2.8 Q7.3 4.5 6.3 6.2 M7.6 1.8 Q9 4.5 7.6 7.2" fill="none" stroke="#ddd" stroke-width="0.7"/></svg>
<div class="t " style="left:580.5px;top:486.5px;font-size:6.781609195402299px;color:#e8e8e8;transform:translate(-50%,-50%) scaleX(0.85);transform-origin:50% 50%;">07:56</div>
<div class="t " style="left:580.5px;top:495.0px;font-size:6.781609195402299px;color:#e8e8e8;transform:translate(-50%,-50%) scaleX(0.85);transform-origin:50% 50%;">27/10/2025</div>
<svg width="14" height="14" viewBox="0 0 14 14" style="left:604px;top:485px"><path d="M0.5 0.5 H9.5 V7.5 H4 L1.8 9.5 V7.5 H0.5 Z" fill="none" stroke="#ddd" stroke-width="0.8"/><path d="M2 2.6 H8 M2 4.4 H8 M2 6 H6" stroke="#ddd" stroke-width="0.6"/><circle cx="10" cy="9.5" r="3.3" fill="#1c1c1c" stroke="#ddd" stroke-width="0.8"/><text x="10" y="11.2" font-size="4.8" fill="#eee" text-anchor="middle" font-family="Liberation Sans">1</text></svg>
<div style="left:3px;top:21.3px;width:151.2px;height:213.8px;background:#fbfbfb;border:0.8px solid #cdcdcd;border-right:1.2px solid #8a8a8a;border-bottom:1.2px solid #8a8a8a;border-radius:0 0 1.5px 0"></div>
<div style="left:4px;top:147px;width:149px;height:11.6px;background:#0b70d0"></div>
<div style="left:5px;top:33.6px;width:147px;height:0.8px;background:#dedede"></div>
<div style="left:5px;top:96px;width:147px;height:0.8px;background:#dedede"></div>
<div style="left:5px;top:171.3px;width:147px;height:0.8px;background:#dedede"></div>
<div style="left:5px;top:196.4px;width:147px;height:0.8px;background:#dedede"></div>
<div style="left:5px;top:221.7px;width:147px;height:0.8px;background:#dedede"></div>
<div class="t " style="left:16.5px;top:29.4px;font-size:7.183908045977011px;color:#111;transform:translateY(-50%) scaleX(0.9);transform-origin:0 50%;"><u>N</u>ew</div>
<div class="t " style="left:113px;top:29.4px;font-size:7.183908045977011px;color:#111;transform:translateY(-50%) scaleX(0.9);transform-origin:0 50%;">Ctrl+N</div>
<div class="t " style="left:16.5px;top:42.60000000000001px;font-size:7.183908045977011px;color:#111;transform:translateY(-50%) scaleX(0.9);transform-origin:0 50%;">New Window</div>
<div class="t " style="left:16.5px;top:54.900000000000006px;font-size:7.183908045977011px;color:#111;transform:translateY(-50%) scaleX(0.9);transform-origin:0 50%;"><u>R</u>ecent Projects</div>
<svg width="4" height="5" style="left:148.5px;top:51.5px"><path d="M0.5 0.5 L3 2 L0.5 3.5 Z" fill="#333"/></svg>
<div class="t " style="left:16.5px;top:66.9px;font-size:7.183908045977011px;color:#111;transform:translateY(-50%) scaleX(0.9);transform-origin:0 50%;"><u>O</u>pen</div>
<div class="t " style="left:113px;top:66.9px;font-size:7.183908045977011px;color:#111;transform:translateY(-50%) scaleX(0.9);transform-origin:0 50%;">Ctrl+O</div>
<div class="t " style="left:16.5px;top:78.9px;font-size:7.183908045977011px;color:#111;transform:translateY(-50%) scaleX(0.9);transform-origin:0 50%;"><u>I</u>mport</div>
<div class="t " style="left:113px;top:78.9px;font-size:7.183908045977011px;color:#111;transform:translateY(-50%) scaleX(0.9);transform-origin:0 50%;">Ctrl+I</div>
<div class="t " style="left:16.5px;top:91.4px;font-size:7.183908045977011px;color:#111;transform:translateY(-50%) scaleX(0.9);transform-origin:0 50%;">Show Notes</div>
<div class="t " style="left:113px;top:91.4px;font-size:7.183908045977011px;color:#111;transform:translateY(-50%) scaleX(0.9);transform-origin:0 50%;">Ctrl+Alt+N</div>
<div class="t " style="left:16.5px;top:104.9px;font-size:7.183908045977011px;color:#111;transform:translateY(-50%) scaleX(0.9);transform-origin:0 50%;"><u>S</u>ave</div>
<div class="t " style="left:113px;top:104.9px;font-size:7.183908045977011px;color:#111;transform:translateY(-50%) scaleX(0.9);transform-origin:0 50%;">Ctrl+S</div>
<div class="t " style="left:16.5px;top:116.9px;font-size:7.183908045977011px;color:#111;transform:translateY(-50%) scaleX(0.9);transform-origin:0 50%;">Save <u>A</u>s</div>
<div class="t " style="left:113px;top:116.9px;font-size:7.183908045977011px;color:#111;transform:translateY(-50%) scaleX(0.9);transform-origin:0 50%;">Ctrl+Shift+S</div>
<div class="t " style="left:16.5px;top:128.89999999999998px;font-size:7.183908045977011px;color:#9a9a9a;transform:translateY(-50%) scaleX(0.9);transform-origin:0 50%;">Save GCode</div>
<div class="t " style="left:113px;top:128.89999999999998px;font-size:7.183908045977011px;color:#9a9a9a;transform:translateY(-50%) scaleX(0.9);transform-origin:0 50%;">Alt+Shift+L</div>
<div class="t " style="left:16.5px;top:141.39999999999998px;font-size:7.183908045977011px;color:#111;transform:translateY(-50%) scaleX(0.9);transform-origin:0 50%;"><u>E</u>xport</div>
<div class="t " style="left:113px;top:141.39999999999998px;font-size:7.183908045977011px;color:#111;transform:translateY(-50%) scaleX(0.9);transform-origin:0 50%;">Alt+X</div>
<div class="t " style="left:16.5px;top:154.39999999999998px;font-size:7.183908045977011px;color:#fff;transform:translateY(-50%) scaleX(0.9);transform-origin:0 50%;">Preferences</div>
<svg width="4" height="5" style="left:148.5px;top:151px"><path d="M0.5 0.5 L3 2 L0.5 3.5 Z" fill="#fff"/></svg>
<div class="t " style="left:16.5px;top:166.79999999999998px;font-size:7.183908045977011px;color:#111;transform:translateY(-50%) scaleX(0.9);transform-origin:0 50%;">Bundles</div>
<svg width="4" height="5" style="left:148.5px;top:163.4px"><path d="M0.5 0.5 L3 2 L0.5 3.5 Z" fill="#333"/></svg>
<div class="t " style="left:16.5px;top:179.89999999999998px;font-size:7.183908045977011px;color:#111;transform:translateY(-50%) scaleX(0.9);transform-origin:0 50%;">Print (Black Only)</div>
<div class="t " style="left:113px;top:179.89999999999998px;font-size:7.183908045977011px;color:#111;transform:translateY(-50%) scaleX(0.9);transform-origin:0 50%;">Ctrl+P</div>
<div class="t " style="left:16.5px;top:191.89999999999998px;font-size:7.183908045977011px;color:#111;transform:translateY(-50%) scaleX(0.9);transform-origin:0 50%;">Print (Keep Colors)</div>
<div class="t " style="left:113px;top:191.89999999999998px;font-size:7.183908045977011px;color:#111;transform:translateY(-50%) scaleX(0.9);transform-origin:0 50%;">Ctrl+Shift+P</div>
<div class="t " style="left:16.5px;top:205.2px;font-size:7.183908045977011px;color:#9a9a9a;transform:translateY(-50%) scaleX(0.9);transform-origin:0 50%;">Save Processed Bitmap</div>
<div class="t " style="left:16.5px;top:217.39999999999998px;font-size:7.183908045977011px;color:#111;transform:translateY(-50%) scaleX(0.9);transform-origin:0 50%;">Save Background Capture</div>
<div class="t " style="left:16.5px;top:230.89999999999998px;font-size:7.183908045977011px;color:#111;transform:translateY(-50%) scaleX(0.9);transform-origin:0 50%;">E<u>x</u>it</div>
<div class="t " style="left:113px;top:230.89999999999998px;font-size:7.183908045977011px;color:#111;transform:translateY(-50%) scaleX(0.9);transform-origin:0 50%;">Ctrl+Q</div>
<svg width="9" height="8" viewBox="0 0 9 8" style="left:6px;top:24px"><path d="M4.6 3.6 V2.4 Q4.6 0.6 2.8 0.6 H0.6 V7.2 H3.6" fill="none" stroke="#1a1a1a" stroke-width="1"/><circle cx="6.3" cy="5.8" r="1.4" fill="none" stroke="#1a1a1a" stroke-width="1.2"/></svg>
<svg width="9" height="9" viewBox="0 0 9 9" style="left:6px;top:36.8px"><path d="M2.6 3.4 V0.8 H8.2 V5.6 H6.2" fill="none" stroke="#1a1a1a" stroke-width="1.1"/><rect x="2.6" y="0.6" width="5.6" height="1.4" fill="#1a1a1a"/><circle cx="2.6" cy="6" r="2" fill="#fbfbfb" stroke="#1a1a1a" stroke-width="1.1"/><path d="M1.5 6 H3.7 M2.6 4.9 V7.1" stroke="#1a1a1a" stroke-width="0.8"/></svg>
<svg width="9" height="7" viewBox="0 0 9 7" style="left:6px;top:62.4px"><path d="M0.7 6 V0.7 H3.2 L4 1.5 H7.2 V2.6 M0.7 6 L2 2.8 H8.4 L7.2 6 Z" fill="none" stroke="#1a1a1a" stroke-width="1.2" stroke-linejoin="round"/></svg>
<svg width="8" height="8" viewBox="0 0 8 8" style="left:6px;top:73.6px"><path d="M4.4 1 Q4.4 0.6 3.8 0.6 H0.7 V7.2 H5.6 V6.2" fill="none" stroke="#1a1a1a" stroke-width="1.1"/><path d="M2.4 4.2 H6.2 M4.8 2.8 L6.4 4.2 L4.8 5.6" fill="none" stroke="#1a1a1a" stroke-width="1.2"/></svg>
<svg width="8" height="8" viewBox="0 0 8 8" style="left:6px;top:86.2px"><path d="M0.6 0.6 H5 L6.4 2 V7.2 H0.6 Z M0.6 2.5 H6.4" fill="none" stroke="#777" stroke-width="1"/></svg>
<svg width="8" height="8" viewBox="0 0 8 8" style="left:6px;top:99.4px"><path d="M0.6 0.6 H6.2 L7.2 1.6 V7.2 H0.6 Z" fill="none" stroke="#1a1a1a" stroke-width="1.1"/><path d="M0.6 3.4 H7.2" stroke="#1a1a1a" stroke-width="0.9"/><path d="M2.2 0.6 V3.4 M5.6 0.6 V3.4" stroke="#1a1a1a" stroke-width="0.5"/></svg>
<svg width="8" height="8" viewBox="0 0 8 8" style="left:6px;top:111.4px"><path d="M0.6 0.6 H6.2 L7.2 1.6 V7.2 H0.6 Z" fill="none" stroke="#1a1a1a" stroke-width="1.1"/><path d="M0.6 3.4 H7.2" stroke="#1a1a1a" stroke-width="0.9"/><path d="M2.2 0.6 V3.4 M5.6 0.6 V3.4" stroke="#1a1a1a" stroke-width="0.5"/><path d="M4 7.8 L7.4 4.4" stroke="#1a1a1a" stroke-width="1.3"/><path d="M3.2 7.2 L4 8" stroke="#fbfbfb" stroke-width="0.5"/></svg>
<svg width="8" height="8" viewBox="0 0 8 8" style="left:6px;top:123.5px"><path d="M0.6 0.6 H6.2 L7.2 1.6 V7.2 H0.6 Z" fill="none" stroke="#888" stroke-width="1.1"/><path d="M0.6 3.4 H7.2" stroke="#888" stroke-width="0.9"/><path d="M2.2 0.6 V3.4 M5.6 0.6 V3.4" stroke="#888" stroke-width="0.5"/></svg>
<svg width="8" height="8" viewBox="0 0 8 8" style="left:6px;top:136px"><path d="M0.6 0.6 H4.2 L6 2.4 V7.2 H0.6 Z" fill="none" stroke="#1a1a1a" stroke-width="1"/><path d="M2.5 4.5 H6.8 M5.2 3 L6.8 4.5 L5.2 6" fill="none" stroke="#1a1a1a" stroke-width="1.1"/></svg>
<svg width="8" height="8" viewBox="0 0 8 8" style="left:5.5px;top:174px"><rect x="2" y="0.3" width="4" height="2" fill="#1a1a1a"/><rect x="0.3" y="2.3" width="7.4" height="3.4" rx="0.6" fill="#1a1a1a"/><rect x="1.8" y="4.8" width="4.4" height="2.6" fill="#fff" stroke="#1a1a1a" stroke-width="0.8"/></svg>
<svg width="8" height="8" viewBox="0 0 8 8" style="left:5.5px;top:186.3px"><rect x="2" y="0.3" width="4" height="2" fill="#1a1a1a"/><rect x="0.3" y="2.3" width="7.4" height="3.4" rx="0.6" fill="#1a1a1a"/><rect x="1.8" y="4.8" width="4.4" height="2.6" fill="#fff" stroke="#1a1a1a" stroke-width="0.8"/></svg>
<svg width="8" height="8" viewBox="0 0 8 8" style="left:6px;top:224.5px"><rect x="0" y="0" width="7.4" height="7.4" rx="0.8" fill="#1a1a1a"/><path d="M2 2 L5.4 5.4 M5.4 2 L2 5.4" stroke="#fff" stroke-width="1.1"/></svg>
<div style="left:153.6px;top:146.4px;width:80.8px;height:62.2px;background:#fbfbfb;border:0.8px solid #bdbdbd;box-shadow:1.2px 1.2px 1.5px rgba(0,0,0,0.3)"></div>
<div style="left:154.4px;top:159.1px;width:79.2px;height:11.5px;background:#0b70d0"></div>
<div style="left:156px;top:196.3px;width:76px;height:0.8px;background:#dedede"></div>
<div class="t " style="left:167px;top:154.6px;font-size:7.183908045977011px;color:#111;transform:translateY(-50%) scaleX(0.9);transform-origin:0 50%;">Import Prefs</div>
<div class="t " style="left:167px;top:166.6px;font-size:7.183908045977011px;color:#fff;transform:translateY(-50%) scaleX(0.9);transform-origin:0 50%;">Export Prefs</div>
<div class="t " style="left:167px;top:179.89999999999998px;font-size:7.183908045977011px;color:#111;transform:translateY(-50%) scaleX(0.9);transform-origin:0 50%;">Open Prefs Folder</div>
<div class="t " style="left:167px;top:192.0px;font-size:7.183908045977011px;color:#111;transform:translateY(-50%) scaleX(0.9);transform-origin:0 50%;">Load Prefs Backup</div>
<div class="t " style="left:167px;top:204.89999999999998px;font-size:7.183908045977011px;color:#111;transform:translateY(-50%) scaleX(0.9);transform-origin:0 50%;">Edit Hotkeys</div>
<svg width="9" height="7" viewBox="0 0 9 7" style="left:156.5px;top:175.4px"><path d="M0.7 6 V0.7 H3.2 L4 1.5 H7.2 V2.6 M0.7 6 L2 2.8 H8.4 L7.2 6 Z" fill="none" stroke="#1a1a1a" stroke-width="1.2" stroke-linejoin="round"/></svg>
<svg width="8" height="8" viewBox="0 0 8 8" style="left:156.5px;top:186.6px"><circle cx="3.1" cy="4.9" r="2.2" fill="none" stroke="#1a1a1a" stroke-width="1.6"/><circle cx="3.1" cy="4.9" r="3.1" fill="none" stroke="#1a1a1a" stroke-width="1" stroke-dasharray="1.2,1.2"/><circle cx="6.6" cy="1.5" r="1.3" fill="#1a1a1a"/></svg>
<svg width="8" height="8" viewBox="0 0 8 8" style="left:156.3px;top:199.8px"><path d="M0.4 6.6 C0.4 3 2.6 0.8 5.4 0.8 C6.6 0.8 7.4 1.4 7.6 2.2 L5.6 2.6 C4.4 2.8 3.8 3.8 3.8 5 L3.4 7 Z" fill="#1a1a1a"/><circle cx="5.6" cy="5.4" r="1.2" fill="#1a1a1a"/></svg>
</body></html>
